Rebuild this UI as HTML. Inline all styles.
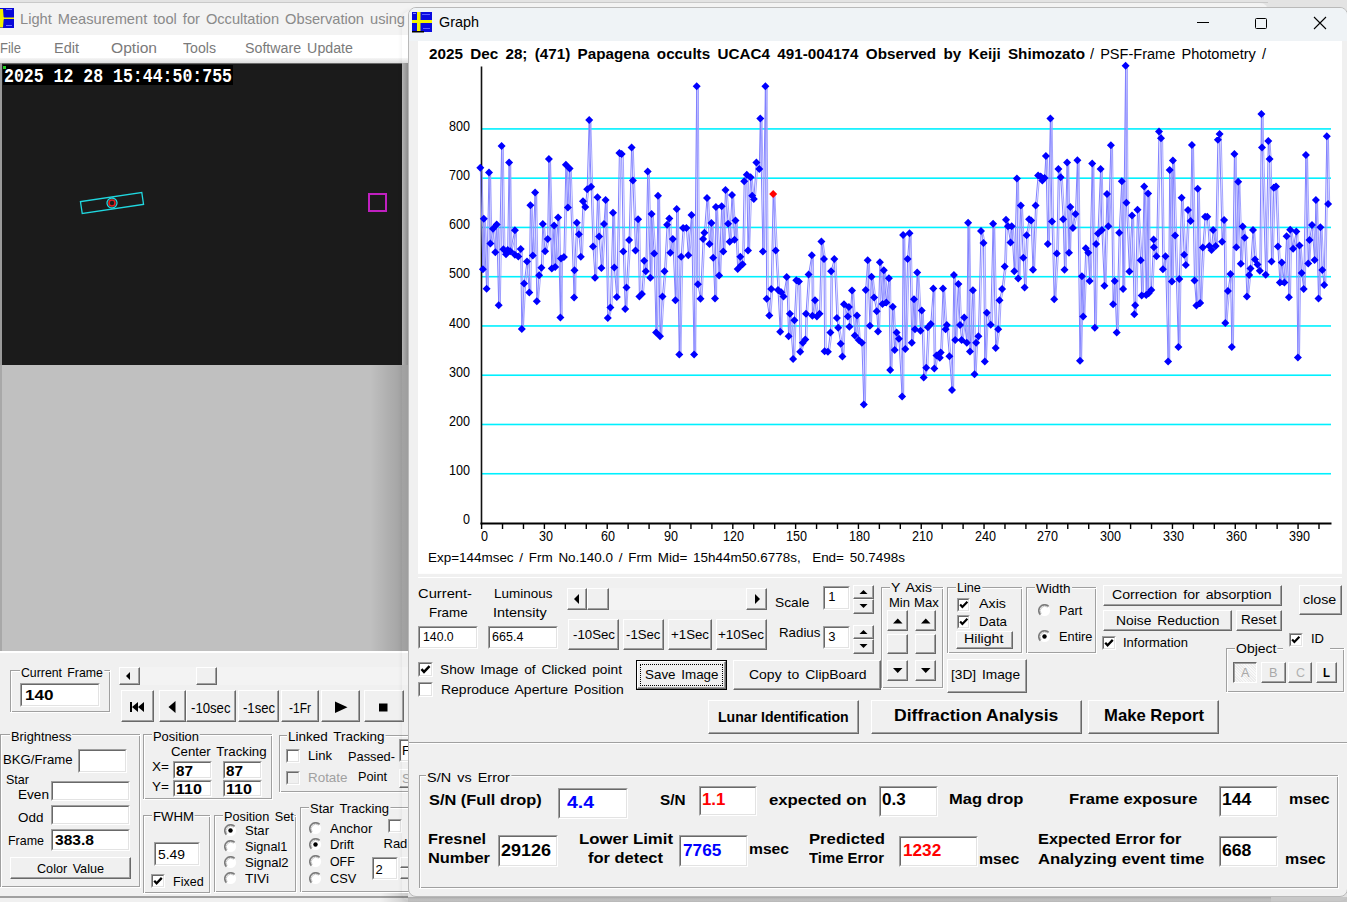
<!DOCTYPE html><html><head><meta charset="utf-8"><style>
html,body{margin:0;padding:0;}
body{width:1347px;height:902px;position:relative;overflow:hidden;background:#e3e3e3;font-family:'Liberation Sans', sans-serif;}
.a{position:absolute;}
.t{position:absolute;white-space:pre;line-height:1;transform-origin:0 0;}
</style></head><body>
<div class="a" style="left:0px;top:0px;width:1347px;height:902px;background:#e3e3e3;"></div>
<div class="a" style="left:0px;top:2px;width:1268px;height:1px;background:#c9c9c9;"></div>
<div class="a" style="left:0px;top:3px;width:1268px;height:32px;background:#f3f3f3;border-top-right-radius:8px;"></div>
<svg class="a" style="left:0px;top:8px" width="15" height="21" viewBox="0 0 15 21"><rect x="0" y="0" width="14" height="20" fill="#0808d8"/><path d="M0 8.5 L4 9.6 L14 9.6 L14 11 L4 11 L0 12 Z" fill="#f0f000"/><path d="M0 1 L3 1 L3.6 9 L4.2 10.2 L3.6 12 L3 19.5 L0 19.5 Z" fill="#f0f000"/><rect x="6" y="1" width="6" height="1" fill="#7070ff"/><rect x="6" y="17" width="6" height="1" fill="#7070ff"/></svg>
<div class="t" style="left:20.00px;top:11.20px;font-size:15px;color:#8a8a8a;word-spacing:2px;transform:scale(0.9754,1.0);">Light Measurement tool for Occultation Observation using</div>
<div class="a" style="left:0px;top:35px;width:408px;height:23px;background:#fff;"></div>
<div class="a" style="left:0px;top:58px;width:408px;height:6px;background:linear-gradient(#f6f6f6,#d8d8d8);"></div>
<div class="t" style="left:0.00px;top:40.65px;font-size:14px;color:#7a7a7a;transform:scale(0.9307,1.0);">File</div>
<div class="t" style="left:54.00px;top:40.65px;font-size:14px;color:#7a7a7a;transform:scale(1.0363,1.0);">Edit</div>
<div class="t" style="left:111.00px;top:40.65px;font-size:14px;color:#7a7a7a;transform:scale(1.1152,1.0);">Option</div>
<div class="t" style="left:183.00px;top:40.65px;font-size:14px;color:#7a7a7a;transform:scale(1.0096,1.0);">Tools</div>
<div class="t" style="left:245.00px;top:40.65px;font-size:14px;color:#7a7a7a;word-spacing:2px;transform:scale(1.0160,1.0);">Software Update</div>
<div class="a" style="left:0px;top:63px;width:408px;height:302px;background:#a0a0a0;"></div>
<div class="a" style="left:0px;top:63px;width:402px;height:1px;background:#696969;"></div>
<div class="a" style="left:0px;top:63px;width:2px;height:302px;background:#9a9a9a;"></div>
<div class="a" style="left:2px;top:64px;width:400px;height:301px;background:#1b1b1b;"></div>
<div class="a" style="left:402px;top:63px;width:6px;height:302px;background:linear-gradient(90deg,#b4b4b4,#8c8c8c);"></div>
<div class="a" style="left:2.5px;top:65px;width:230.5px;height:20px;background:#000;"></div>
<div class="t" style="left:4.00px;top:66.31px;font-size:16px;color:#fff;font-weight:700;font-family:'Liberation Mono', monospace;transform:scale(1.0324,1.32);">2025 12 28 15:44:50:755</div>
<div class="a" style="left:3px;top:66px;width:3px;height:3px;background:#22cc22;"></div>
<svg class="a" style="left:70px;top:180px" width="90" height="45" viewBox="70 180 90 45"><g transform="rotate(-8.5 112 203)" fill="none" stroke="#20d8e0" stroke-width="1.3"><rect x="81" y="197" width="62" height="12"/><circle cx="112" cy="203" r="5"/></g><circle cx="112" cy="203" r="3" fill="none" stroke="#e02020" stroke-width="1.6"/></svg>
<div class="a" style="left:368px;top:193px;width:19px;height:19px;border:2px solid #c020c0;box-sizing:border-box;"></div>
<div class="a" style="left:0px;top:365px;width:408px;height:286px;background:#c0c0c0;"></div>
<div class="a" style="left:0px;top:365px;width:2px;height:286px;background:#a8a8a8;"></div>
<div class="a" style="left:370px;top:365px;width:38px;height:286px;background:linear-gradient(90deg,rgba(0,0,0,0),rgba(0,0,0,0.18));"></div>
<div class="a" style="left:0px;top:651px;width:408px;height:251px;background:#f0f0f0;"></div>
<div class="a" style="left:0px;top:651px;width:408px;height:2px;background:#fff;"></div>
<div class="a" style="left:0px;top:896px;width:408px;height:1.5px;background:#a0a0a0;"></div>
<div class="a" style="left:0px;top:897.5px;width:408px;height:5px;background:#f0f0f0;"></div>
<div class="a" style="left:10px;top:670px;width:100px;height:42px;border:1px solid #a0a0a0;box-sizing:border-box;"></div>
<div class="a" style="left:11px;top:671px;width:99px;height:41px;border-left:1px solid #fff;border-top:1px solid #fff;box-sizing:border-box;"></div>
<div class="a" style="left:10px;top:670px;width:101px;height:43px;border-right:1px solid #fff;border-bottom:1px solid #fff;box-sizing:border-box;"></div>
<div class="t" style="left:21.00px;top:665.50px;font-size:13px;color:#000;word-spacing:2px;transform:scale(0.9476,1.0);background:#f0f0f0;padding:0 1px;margin-left:-1px;">Current Frame</div>
<div class="a" style="left:20px;top:683px;width:80px;height:24px;background:#fff;border-top:1px solid #a0a0a0;border-left:1px solid #a0a0a0;border-bottom:1px solid #fff;border-right:1px solid #fff;box-sizing:border-box;"></div>
<div class="a" style="left:21px;top:684px;width:78px;height:22px;border-top:1px solid #696969;border-left:1px solid #696969;border-bottom:1px solid #e3e3e3;border-right:1px solid #e3e3e3;box-sizing:border-box;"></div>
<div class="t" style="left:24.50px;top:687.30px;font-size:15px;color:#000;font-weight:700;transform:scale(1.1386,1.0);">140</div>
<div class="a" style="left:119px;top:667px;width:289px;height:18px;background:#f3f3f3;"></div>
<div class="a" style="left:119px;top:667px;width:21px;height:18px;background:#f0f0f0;border-top:1px solid #fff;border-left:1px solid #fff;border-bottom:1px solid #696969;border-right:1px solid #696969;box-sizing:border-box;"></div>
<div class="a" style="left:120px;top:668px;width:19px;height:16px;border-bottom:1px solid #a0a0a0;border-right:1px solid #a0a0a0;box-sizing:border-box;"></div>
<svg class="a" style="left:119px;top:667px" width="21" height="18"><path d="M7 9 L11 5 L11 13 Z" fill="#000"/></svg>
<div class="a" style="left:196px;top:667px;width:21px;height:18px;background:#f0f0f0;border-top:1px solid #fff;border-left:1px solid #fff;border-bottom:1px solid #696969;border-right:1px solid #696969;box-sizing:border-box;"></div>
<div class="a" style="left:197px;top:668px;width:19px;height:16px;border-bottom:1px solid #a0a0a0;border-right:1px solid #a0a0a0;box-sizing:border-box;"></div>
<div class="a" style="left:121px;top:690px;width:33px;height:32px;background:#f0f0f0;border-top:1px solid #fff;border-left:1px solid #fff;border-bottom:1px solid #696969;border-right:1px solid #696969;box-sizing:border-box;"></div>
<div class="a" style="left:122px;top:691px;width:31px;height:30px;border-bottom:1px solid #a0a0a0;border-right:1px solid #a0a0a0;box-sizing:border-box;"></div>
<div class="a" style="left:159px;top:690px;width:27px;height:32px;background:#f0f0f0;border-top:1px solid #fff;border-left:1px solid #fff;border-bottom:1px solid #696969;border-right:1px solid #696969;box-sizing:border-box;"></div>
<div class="a" style="left:160px;top:691px;width:25px;height:30px;border-bottom:1px solid #a0a0a0;border-right:1px solid #a0a0a0;box-sizing:border-box;"></div>
<div class="a" style="left:186px;top:690px;width:50px;height:32px;background:#f0f0f0;border-top:1px solid #fff;border-left:1px solid #fff;border-bottom:1px solid #696969;border-right:1px solid #696969;box-sizing:border-box;"></div>
<div class="a" style="left:187px;top:691px;width:48px;height:30px;border-bottom:1px solid #a0a0a0;border-right:1px solid #a0a0a0;box-sizing:border-box;"></div>
<div class="t" style="left:191.25px;top:700.65px;font-size:14px;color:#000;transform:scale(0.9398,1.0);">-10sec</div>
<div class="a" style="left:238px;top:690px;width:41px;height:32px;background:#f0f0f0;border-top:1px solid #fff;border-left:1px solid #fff;border-bottom:1px solid #696969;border-right:1px solid #696969;box-sizing:border-box;"></div>
<div class="a" style="left:239px;top:691px;width:39px;height:30px;border-bottom:1px solid #a0a0a0;border-right:1px solid #a0a0a0;box-sizing:border-box;"></div>
<div class="t" style="left:242.50px;top:700.65px;font-size:14px;color:#000;transform:scale(0.9347,1.0);">-1sec</div>
<div class="a" style="left:281px;top:690px;width:38px;height:32px;background:#f0f0f0;border-top:1px solid #fff;border-left:1px solid #fff;border-bottom:1px solid #696969;border-right:1px solid #696969;box-sizing:border-box;"></div>
<div class="a" style="left:282px;top:691px;width:36px;height:30px;border-bottom:1px solid #a0a0a0;border-right:1px solid #a0a0a0;box-sizing:border-box;"></div>
<div class="t" style="left:289.00px;top:700.65px;font-size:14px;color:#000;transform:scale(0.8570,1.0);">-1Fr</div>
<div class="a" style="left:321px;top:690px;width:39px;height:32px;background:#f0f0f0;border-top:1px solid #fff;border-left:1px solid #fff;border-bottom:1px solid #696969;border-right:1px solid #696969;box-sizing:border-box;"></div>
<div class="a" style="left:322px;top:691px;width:37px;height:30px;border-bottom:1px solid #a0a0a0;border-right:1px solid #a0a0a0;box-sizing:border-box;"></div>
<div class="a" style="left:364px;top:690px;width:40px;height:32px;background:#f0f0f0;border-top:1px solid #fff;border-left:1px solid #fff;border-bottom:1px solid #696969;border-right:1px solid #696969;box-sizing:border-box;"></div>
<div class="a" style="left:365px;top:691px;width:38px;height:30px;border-bottom:1px solid #a0a0a0;border-right:1px solid #a0a0a0;box-sizing:border-box;"></div>
<svg class="a" style="left:121px;top:690px" width="290" height="32" viewBox="121 690 290 32"><path d="M130 702 h2 v10 h-2z M132 707 l6 -5 v10z M138 707 l6 -5 v10z" fill="#000"/><path d="M168.5 707 l7 -6 v12z" fill="#000"/><path d="M335 701.5 l12.5 5.75 l-12.5 5.75z" fill="#000"/><rect x="379" y="703.5" width="8.5" height="8" fill="#000"/></svg>
<div class="a" style="left:0px;top:734px;width:140px;height:153px;border:1px solid #a0a0a0;box-sizing:border-box;"></div>
<div class="a" style="left:1px;top:735px;width:139px;height:152px;border-left:1px solid #fff;border-top:1px solid #fff;box-sizing:border-box;"></div>
<div class="a" style="left:0px;top:734px;width:141px;height:154px;border-right:1px solid #fff;border-bottom:1px solid #fff;box-sizing:border-box;"></div>
<div class="t" style="left:10.50px;top:730.00px;font-size:13px;color:#000;transform:scale(0.9850,1.0);background:#f0f0f0;padding:0 1px;margin-left:-1px;">Brightness</div>
<div class="t" style="left:3.00px;top:752.50px;font-size:13px;color:#000;transform:scale(1.0128,1.0);">BKG/Frame</div>
<div class="a" style="left:78px;top:749px;width:49px;height:24px;background:#fff;border-top:1px solid #a0a0a0;border-left:1px solid #a0a0a0;border-bottom:1px solid #fff;border-right:1px solid #fff;box-sizing:border-box;"></div>
<div class="a" style="left:79px;top:750px;width:47px;height:22px;border-top:1px solid #696969;border-left:1px solid #696969;border-bottom:1px solid #e3e3e3;border-right:1px solid #e3e3e3;box-sizing:border-box;"></div>
<div class="t" style="left:6.00px;top:772.50px;font-size:13px;color:#000;transform:scale(0.9646,1.0);">Star</div>
<div class="t" style="left:18.20px;top:787.70px;font-size:13px;color:#000;transform:scale(1.0459,1.0);">Even</div>
<div class="a" style="left:51px;top:780.5px;width:79px;height:20.5px;background:#fff;border-top:1px solid #a0a0a0;border-left:1px solid #a0a0a0;border-bottom:1px solid #fff;border-right:1px solid #fff;box-sizing:border-box;"></div>
<div class="a" style="left:52px;top:781.5px;width:77px;height:18.5px;border-top:1px solid #696969;border-left:1px solid #696969;border-bottom:1px solid #e3e3e3;border-right:1px solid #e3e3e3;box-sizing:border-box;"></div>
<div class="t" style="left:18.20px;top:811.00px;font-size:13px;color:#000;transform:scale(1.0334,1.0);">Odd</div>
<div class="a" style="left:51px;top:805px;width:79px;height:20px;background:#fff;border-top:1px solid #a0a0a0;border-left:1px solid #a0a0a0;border-bottom:1px solid #fff;border-right:1px solid #fff;box-sizing:border-box;"></div>
<div class="a" style="left:52px;top:806px;width:77px;height:18px;border-top:1px solid #696969;border-left:1px solid #696969;border-bottom:1px solid #e3e3e3;border-right:1px solid #e3e3e3;box-sizing:border-box;"></div>
<div class="t" style="left:8.00px;top:834.00px;font-size:13px;color:#000;transform:scale(0.9584,1.0);">Frame</div>
<div class="a" style="left:51px;top:829px;width:79px;height:22px;background:#fff;border-top:1px solid #a0a0a0;border-left:1px solid #a0a0a0;border-bottom:1px solid #fff;border-right:1px solid #fff;box-sizing:border-box;"></div>
<div class="a" style="left:52px;top:830px;width:77px;height:20px;border-top:1px solid #696969;border-left:1px solid #696969;border-bottom:1px solid #e3e3e3;border-right:1px solid #e3e3e3;box-sizing:border-box;"></div>
<div class="t" style="left:55.00px;top:833.15px;font-size:14px;color:#000;font-weight:700;transform:scale(1.1128,1.0);">383.8</div>
<div class="a" style="left:10px;top:857px;width:121px;height:22px;background:#f0f0f0;border-top:1px solid #fff;border-left:1px solid #fff;border-bottom:1px solid #696969;border-right:1px solid #696969;box-sizing:border-box;"></div>
<div class="a" style="left:11px;top:858px;width:119px;height:20px;border-bottom:1px solid #a0a0a0;border-right:1px solid #a0a0a0;box-sizing:border-box;"></div>
<div class="t" style="left:37.00px;top:861.50px;font-size:13px;color:#000;word-spacing:2px;transform:scale(0.9715,1.0);">Color Value</div>
<div class="a" style="left:143px;top:734px;width:129px;height:65px;border:1px solid #a0a0a0;box-sizing:border-box;"></div>
<div class="a" style="left:144px;top:735px;width:128px;height:64px;border-left:1px solid #fff;border-top:1px solid #fff;box-sizing:border-box;"></div>
<div class="a" style="left:143px;top:734px;width:130px;height:66px;border-right:1px solid #fff;border-bottom:1px solid #fff;box-sizing:border-box;"></div>
<div class="t" style="left:153.00px;top:730.00px;font-size:13px;color:#000;transform:scale(0.9946,1.0);background:#f0f0f0;padding:0 1px;margin-left:-1px;">Position</div>
<div class="t" style="left:171.00px;top:745.30px;font-size:13px;color:#000;word-spacing:2px;transform:scale(1.0196,1.0);">Center Tracking</div>
<div class="t" style="left:152.20px;top:760.00px;font-size:13px;color:#000;transform:scale(1.0451,1.0);">X=</div>
<div class="t" style="left:152.20px;top:779.70px;font-size:13px;color:#000;transform:scale(1.0451,1.0);">Y=</div>
<div class="a" style="left:173px;top:761px;width:39px;height:18px;background:#fff;border-top:1px solid #a0a0a0;border-left:1px solid #a0a0a0;border-bottom:1px solid #fff;border-right:1px solid #fff;box-sizing:border-box;"></div>
<div class="a" style="left:174px;top:762px;width:37px;height:16px;border-top:1px solid #696969;border-left:1px solid #696969;border-bottom:1px solid #e3e3e3;border-right:1px solid #e3e3e3;box-sizing:border-box;"></div>
<div class="a" style="left:173px;top:779.5px;width:39px;height:17px;background:#fff;border-top:1px solid #a0a0a0;border-left:1px solid #a0a0a0;border-bottom:1px solid #fff;border-right:1px solid #fff;box-sizing:border-box;"></div>
<div class="a" style="left:174px;top:780.5px;width:37px;height:15px;border-top:1px solid #696969;border-left:1px solid #696969;border-bottom:1px solid #e3e3e3;border-right:1px solid #e3e3e3;box-sizing:border-box;"></div>
<div class="t" style="left:176.40px;top:764.15px;font-size:14px;color:#000;font-weight:700;transform:scale(1.0913,1.0);">87</div>
<div class="t" style="left:176.40px;top:781.85px;font-size:14px;color:#000;font-weight:700;transform:scale(1.1508,1.0);">110</div>
<div class="a" style="left:223px;top:761px;width:39px;height:18px;background:#fff;border-top:1px solid #a0a0a0;border-left:1px solid #a0a0a0;border-bottom:1px solid #fff;border-right:1px solid #fff;box-sizing:border-box;"></div>
<div class="a" style="left:224px;top:762px;width:37px;height:16px;border-top:1px solid #696969;border-left:1px solid #696969;border-bottom:1px solid #e3e3e3;border-right:1px solid #e3e3e3;box-sizing:border-box;"></div>
<div class="a" style="left:223px;top:779.5px;width:39px;height:17px;background:#fff;border-top:1px solid #a0a0a0;border-left:1px solid #a0a0a0;border-bottom:1px solid #fff;border-right:1px solid #fff;box-sizing:border-box;"></div>
<div class="a" style="left:224px;top:780.5px;width:37px;height:15px;border-top:1px solid #696969;border-left:1px solid #696969;border-bottom:1px solid #e3e3e3;border-right:1px solid #e3e3e3;box-sizing:border-box;"></div>
<div class="t" style="left:226.40px;top:764.15px;font-size:14px;color:#000;font-weight:700;transform:scale(1.0913,1.0);">87</div>
<div class="t" style="left:226.40px;top:781.85px;font-size:14px;color:#000;font-weight:700;transform:scale(1.1508,1.0);">110</div>
<div class="a" style="left:143px;top:814.5px;width:67px;height:78px;border:1px solid #a0a0a0;box-sizing:border-box;"></div>
<div class="a" style="left:144px;top:815.5px;width:66px;height:77px;border-left:1px solid #fff;border-top:1px solid #fff;box-sizing:border-box;"></div>
<div class="a" style="left:143px;top:814.5px;width:68px;height:79px;border-right:1px solid #fff;border-bottom:1px solid #fff;box-sizing:border-box;"></div>
<div class="t" style="left:153.00px;top:810.00px;font-size:13px;color:#000;transform:scale(1.0139,1.0);background:#f0f0f0;padding:0 1px;margin-left:-1px;">FWHM</div>
<div class="a" style="left:154px;top:842px;width:46px;height:24px;background:#fff;border-top:1px solid #a0a0a0;border-left:1px solid #a0a0a0;border-bottom:1px solid #fff;border-right:1px solid #fff;box-sizing:border-box;"></div>
<div class="a" style="left:155px;top:843px;width:44px;height:22px;border-top:1px solid #696969;border-left:1px solid #696969;border-bottom:1px solid #e3e3e3;border-right:1px solid #e3e3e3;box-sizing:border-box;"></div>
<div class="t" style="left:157.60px;top:848.00px;font-size:13px;color:#000;transform:scale(1.0667,1.0);">5.49</div>
<div class="a" style="left:151px;top:873.5px;width:14px;height:14px;background:#fff;border-top:1px solid #a0a0a0;border-left:1px solid #a0a0a0;border-bottom:1px solid #fff;border-right:1px solid #fff;box-sizing:border-box;"></div>
<div class="a" style="left:152px;top:874.5px;width:12px;height:12px;border-top:1px solid #696969;border-left:1px solid #696969;border-bottom:1px solid #e3e3e3;border-right:1px solid #e3e3e3;box-sizing:border-box;"></div>
<svg class="a" style="left:151px;top:873.5px" width="14" height="14" viewBox="0 0 13 13"><path d="M3 6.2 L5.2 8.6 L10 3.6" stroke="#000" stroke-width="2.1" fill="none"/></svg>
<div class="t" style="left:173.40px;top:874.60px;font-size:13px;color:#000;transform:scale(0.9624,1.0);">Fixed</div>
<div class="a" style="left:213.5px;top:814.5px;width:82px;height:77.5px;border:1px solid #a0a0a0;box-sizing:border-box;"></div>
<div class="a" style="left:214.5px;top:815.5px;width:81px;height:76.5px;border-left:1px solid #fff;border-top:1px solid #fff;box-sizing:border-box;"></div>
<div class="a" style="left:213.5px;top:814.5px;width:83px;height:78.5px;border-right:1px solid #fff;border-bottom:1px solid #fff;box-sizing:border-box;"></div>
<div class="t" style="left:223.60px;top:810.00px;font-size:13px;color:#000;word-spacing:2px;transform:scale(0.9779,1.0);background:#f0f0f0;padding:0 1px;margin-left:-1px;">Position Set</div>
<svg class="a" style="left:224.1px;top:823.5px" width="13" height="13" viewBox="-6.5 -6.5 13 13"><circle cx="0" cy="0" r="5.6" fill="#fff"/><path d="M4.1 -4.1 A5.8 5.8 0 0 0 -4.1 4.1" stroke="#7c7c7c" stroke-width="1.7" fill="none"/><path d="M3.3 -3.3 A4.7 4.7 0 0 0 -3.3 3.3" stroke="#b8b8b8" stroke-width="0.8" fill="none"/><circle cx="0" cy="0" r="2.2" fill="#000"/></svg>
<div class="t" style="left:245.30px;top:824.00px;font-size:13px;color:#000;transform:scale(1.0066,1.0);">Star</div>
<svg class="a" style="left:224.1px;top:839.5px" width="13" height="13" viewBox="-6.5 -6.5 13 13"><circle cx="0" cy="0" r="5.6" fill="#fff"/><path d="M4.1 -4.1 A5.8 5.8 0 0 0 -4.1 4.1" stroke="#7c7c7c" stroke-width="1.7" fill="none"/><path d="M3.3 -3.3 A4.7 4.7 0 0 0 -3.3 3.3" stroke="#b8b8b8" stroke-width="0.8" fill="none"/></svg>
<div class="t" style="left:245.30px;top:840.00px;font-size:13px;color:#000;transform:scale(0.9775,1.0);">Signal1</div>
<svg class="a" style="left:224.1px;top:855.7px" width="13" height="13" viewBox="-6.5 -6.5 13 13"><circle cx="0" cy="0" r="5.6" fill="#fff"/><path d="M4.1 -4.1 A5.8 5.8 0 0 0 -4.1 4.1" stroke="#7c7c7c" stroke-width="1.7" fill="none"/><path d="M3.3 -3.3 A4.7 4.7 0 0 0 -3.3 3.3" stroke="#b8b8b8" stroke-width="0.8" fill="none"/></svg>
<div class="t" style="left:245.30px;top:856.20px;font-size:13px;color:#000;transform:scale(1.0052,1.0);">Signal2</div>
<svg class="a" style="left:224.1px;top:871.9px" width="13" height="13" viewBox="-6.5 -6.5 13 13"><circle cx="0" cy="0" r="5.6" fill="#fff"/><path d="M4.1 -4.1 A5.8 5.8 0 0 0 -4.1 4.1" stroke="#7c7c7c" stroke-width="1.7" fill="none"/><path d="M3.3 -3.3 A4.7 4.7 0 0 0 -3.3 3.3" stroke="#b8b8b8" stroke-width="0.8" fill="none"/></svg>
<div class="t" style="left:245.30px;top:872.40px;font-size:13px;color:#000;transform:scale(1.0485,1.0);">TIVi</div>
<div class="a" style="left:278.6px;top:734.5px;width:140px;height:57px;border:1px solid #a0a0a0;box-sizing:border-box;"></div>
<div class="a" style="left:279.6px;top:735.5px;width:139px;height:56px;border-left:1px solid #fff;border-top:1px solid #fff;box-sizing:border-box;"></div>
<div class="a" style="left:278.6px;top:734.5px;width:141px;height:58px;border-right:1px solid #fff;border-bottom:1px solid #fff;box-sizing:border-box;"></div>
<div class="t" style="left:288.00px;top:730.00px;font-size:13px;color:#000;word-spacing:2px;transform:scale(1.0369,1.0);background:#f0f0f0;padding:0 1px;margin-left:-1px;">Linked Tracking</div>
<div class="a" style="left:285.5px;top:748.5px;width:14px;height:14px;background:#fff;border-top:1px solid #a0a0a0;border-left:1px solid #a0a0a0;border-bottom:1px solid #fff;border-right:1px solid #fff;box-sizing:border-box;"></div>
<div class="a" style="left:286.5px;top:749.5px;width:12px;height:12px;border-top:1px solid #696969;border-left:1px solid #696969;border-bottom:1px solid #e3e3e3;border-right:1px solid #e3e3e3;box-sizing:border-box;"></div>
<div class="t" style="left:308.30px;top:748.50px;font-size:13px;color:#000;transform:scale(1.0059,1.0);">Link</div>
<div class="t" style="left:348.20px;top:749.50px;font-size:13px;color:#000;transform:scale(0.9853,1.0);">Passed-</div>
<div class="a" style="left:399px;top:739px;width:20px;height:22.5px;background:#fff;border-top:1px solid #a0a0a0;border-left:1px solid #a0a0a0;border-bottom:1px solid #fff;border-right:1px solid #fff;box-sizing:border-box;"></div>
<div class="a" style="left:400px;top:740px;width:18px;height:20.5px;border-top:1px solid #696969;border-left:1px solid #696969;border-bottom:1px solid #e3e3e3;border-right:1px solid #e3e3e3;box-sizing:border-box;"></div>
<div class="t" style="left:402.00px;top:744.00px;font-size:13px;color:#000;">F</div>
<div class="a" style="left:285.5px;top:771px;width:14px;height:14px;background:#f0f0f0;border-top:1px solid #a0a0a0;border-left:1px solid #a0a0a0;border-bottom:1px solid #fff;border-right:1px solid #fff;box-sizing:border-box;"></div>
<div class="a" style="left:286.5px;top:772px;width:12px;height:12px;border-top:1px solid #696969;border-left:1px solid #696969;border-bottom:1px solid #e3e3e3;border-right:1px solid #e3e3e3;box-sizing:border-box;"></div>
<div class="t" style="left:308.30px;top:770.50px;font-size:13px;color:#a0a0a0;transform:scale(1.0310,1.0);">Rotate</div>
<div class="t" style="left:358.30px;top:769.50px;font-size:13px;color:#000;transform:scale(0.9784,1.0);">Point</div>
<div class="a" style="left:399px;top:768.5px;width:20px;height:19px;background:#f0f0f0;border-top:1px solid #fff;border-left:1px solid #fff;border-bottom:1px solid #696969;border-right:1px solid #696969;box-sizing:border-box;"></div>
<div class="a" style="left:400px;top:769.5px;width:18px;height:17px;border-bottom:1px solid #a0a0a0;border-right:1px solid #a0a0a0;box-sizing:border-box;"></div>
<div class="t" style="left:402.00px;top:772.00px;font-size:13px;color:#a0a0a0;">S</div>
<div class="a" style="left:300px;top:807px;width:120px;height:85px;border:1px solid #a0a0a0;box-sizing:border-box;"></div>
<div class="a" style="left:301px;top:808px;width:119px;height:84px;border-left:1px solid #fff;border-top:1px solid #fff;box-sizing:border-box;"></div>
<div class="a" style="left:300px;top:807px;width:121px;height:86px;border-right:1px solid #fff;border-bottom:1px solid #fff;box-sizing:border-box;"></div>
<div class="t" style="left:310.30px;top:802.00px;font-size:13px;color:#000;word-spacing:2px;transform:scale(1.0052,1.0);background:#f0f0f0;padding:0 1px;margin-left:-1px;">Star Tracking</div>
<svg class="a" style="left:309.0px;top:821.5px" width="13" height="13" viewBox="-6.5 -6.5 13 13"><circle cx="0" cy="0" r="5.6" fill="#fff"/><path d="M4.1 -4.1 A5.8 5.8 0 0 0 -4.1 4.1" stroke="#7c7c7c" stroke-width="1.7" fill="none"/><path d="M3.3 -3.3 A4.7 4.7 0 0 0 -3.3 3.3" stroke="#b8b8b8" stroke-width="0.8" fill="none"/></svg>
<div class="t" style="left:330.00px;top:822.00px;font-size:13px;color:#000;transform:scale(1.0290,1.0);">Anchor</div>
<svg class="a" style="left:309.0px;top:837.5px" width="13" height="13" viewBox="-6.5 -6.5 13 13"><circle cx="0" cy="0" r="5.6" fill="#fff"/><path d="M4.1 -4.1 A5.8 5.8 0 0 0 -4.1 4.1" stroke="#7c7c7c" stroke-width="1.7" fill="none"/><path d="M3.3 -3.3 A4.7 4.7 0 0 0 -3.3 3.3" stroke="#b8b8b8" stroke-width="0.8" fill="none"/><circle cx="0" cy="0" r="2.2" fill="#000"/></svg>
<div class="t" style="left:330.00px;top:838.00px;font-size:13px;color:#000;transform:scale(1.0066,1.0);">Drift</div>
<svg class="a" style="left:309.0px;top:854.7px" width="13" height="13" viewBox="-6.5 -6.5 13 13"><circle cx="0" cy="0" r="5.6" fill="#fff"/><path d="M4.1 -4.1 A5.8 5.8 0 0 0 -4.1 4.1" stroke="#7c7c7c" stroke-width="1.7" fill="none"/><path d="M3.3 -3.3 A4.7 4.7 0 0 0 -3.3 3.3" stroke="#b8b8b8" stroke-width="0.8" fill="none"/></svg>
<div class="t" style="left:330.00px;top:855.20px;font-size:13px;color:#000;transform:scale(0.9500,1.0);">OFF</div>
<svg class="a" style="left:309.0px;top:871.9px" width="13" height="13" viewBox="-6.5 -6.5 13 13"><circle cx="0" cy="0" r="5.6" fill="#fff"/><path d="M4.1 -4.1 A5.8 5.8 0 0 0 -4.1 4.1" stroke="#7c7c7c" stroke-width="1.7" fill="none"/><path d="M3.3 -3.3 A4.7 4.7 0 0 0 -3.3 3.3" stroke="#b8b8b8" stroke-width="0.8" fill="none"/></svg>
<div class="t" style="left:330.00px;top:872.40px;font-size:13px;color:#000;transform:scale(0.9838,1.0);">CSV</div>
<div class="a" style="left:388px;top:818.5px;width:14px;height:14px;background:#fff;border-top:1px solid #a0a0a0;border-left:1px solid #a0a0a0;border-bottom:1px solid #fff;border-right:1px solid #fff;box-sizing:border-box;"></div>
<div class="a" style="left:389px;top:819.5px;width:12px;height:12px;border-top:1px solid #696969;border-left:1px solid #696969;border-bottom:1px solid #e3e3e3;border-right:1px solid #e3e3e3;box-sizing:border-box;"></div>
<div class="t" style="left:383.50px;top:837.00px;font-size:13px;color:#000;">Rad</div>
<div class="a" style="left:372px;top:857px;width:26px;height:22.5px;background:#fff;border-top:1px solid #a0a0a0;border-left:1px solid #a0a0a0;border-bottom:1px solid #fff;border-right:1px solid #fff;box-sizing:border-box;"></div>
<div class="a" style="left:373px;top:858px;width:24px;height:20.5px;border-top:1px solid #696969;border-left:1px solid #696969;border-bottom:1px solid #e3e3e3;border-right:1px solid #e3e3e3;box-sizing:border-box;"></div>
<div class="t" style="left:375.50px;top:862.70px;font-size:13px;color:#000;">2</div>
<div class="a" style="left:400px;top:857px;width:12px;height:11px;background:#f0f0f0;border-top:1px solid #fff;border-left:1px solid #fff;border-bottom:1px solid #696969;border-right:1px solid #696969;box-sizing:border-box;"></div>
<div class="a" style="left:401px;top:858px;width:10px;height:9px;border-bottom:1px solid #a0a0a0;border-right:1px solid #a0a0a0;box-sizing:border-box;"></div>
<div class="a" style="left:400px;top:868px;width:12px;height:11px;background:#f0f0f0;border-top:1px solid #fff;border-left:1px solid #fff;border-bottom:1px solid #696969;border-right:1px solid #696969;box-sizing:border-box;"></div>
<div class="a" style="left:401px;top:869px;width:10px;height:9px;border-bottom:1px solid #a0a0a0;border-right:1px solid #a0a0a0;box-sizing:border-box;"></div>
<div class="a" style="left:408px;top:897px;width:863px;height:5px;background:linear-gradient(#a8a8a8,#bdbdbd 40%,#c2c2c2);"></div>
<div class="a" style="left:1271px;top:897px;width:76px;height:5px;background:#c8c8c8;"></div>
<div class="a" style="left:380px;top:893px;width:28px;height:9px;background:linear-gradient(90deg,rgba(0,0,0,0),rgba(0,0,0,0.15));"></div>
<div class="a" style="left:402px;top:11px;width:946px;height:890px;box-shadow:0 0 5px rgba(0,0,0,0.08);border-radius:8px;"></div>
<div class="a" style="left:408px;top:7px;width:940px;height:890px;background:#f0f0f0;border-radius:8px;border:1px solid #b9b9b9;box-sizing:border-box;overflow:hidden;"></div>
<div class="a" style="left:409px;top:8px;width:938px;height:33px;background:#eff3f6;border-top-left-radius:7px;border-top-right-radius:7px;"></div>
<svg class="a" style="left:412px;top:12px" width="21" height="21" viewBox="0 0 21 21"><rect x="0" y="0" width="20" height="20" fill="#0a0ae0"/><rect x="0" y="8" width="20" height="3" fill="#f5f500"/><rect x="5" y="0" width="3.5" height="20" fill="#f5f500"/><rect x="1" y="1" width="3" height="1" fill="#8080ff"/><rect x="10" y="2" width="8" height="1" fill="#6060ff"/><rect x="11" y="16" width="7" height="1" fill="#6060ff"/><rect x="0" y="19" width="12" height="1.5" fill="#000"/></svg>
<div class="t" style="left:439.30px;top:15.43px;font-size:14.5px;color:#000;transform:scale(0.9922,1.0);">Graph</div>
<div class="a" style="left:1197px;top:22px;width:12px;height:1px;background:#000;"></div>
<div class="a" style="left:1255px;top:17.5px;width:12px;height:11.5px;border:1px solid #000;border-radius:1.5px;box-sizing:border-box;"></div>
<svg class="a" style="left:1313px;top:16px" width="14" height="14"><path d="M1 1 L13 13 M13 1 L1 13" stroke="#000" stroke-width="1.1"/></svg>
<div class="a" style="left:418px;top:41px;width:924px;height:532px;background:#fff;"></div>
<div class="a" style="left:418px;top:573px;width:924px;height:1px;background:#fdfdfd;"></div>
<div class="a" style="left:418px;top:577px;width:924px;height:1px;background:#fff;"></div>
<div class="t" style="left:428.90px;top:46.30px;font-size:15px;color:#000;font-weight:700;transform:scale(1.0158,1.0);word-spacing:3px;">2025 Dec 28; (471) Papagena occults UCAC4 491-004174 Observed by Keiji Shimozato</div>
<div class="t" style="left:1090.00px;top:47.15px;font-size:14px;color:#000;word-spacing:2px;transform:scale(1.0391,1.0);">/ PSF-Frame Photometry /</div>
<svg class="a" style="left:0;top:0" width="1347" height="902" viewBox="0 0 1347 902"><rect x="482" y="472.94" width="849" height="1.6" fill="#00f0ff"/><rect x="482" y="423.68" width="849" height="1.6" fill="#00f0ff"/><rect x="482" y="374.42" width="849" height="1.6" fill="#00f0ff"/><rect x="482" y="325.16" width="849" height="1.6" fill="#00f0ff"/><rect x="482" y="275.90" width="849" height="1.6" fill="#00f0ff"/><rect x="482" y="226.64" width="849" height="1.6" fill="#00f0ff"/><rect x="482" y="177.38" width="849" height="1.6" fill="#00f0ff"/><rect x="482" y="128.12" width="849" height="1.6" fill="#00f0ff"/><rect x="480.7" y="66.5" width="1.6" height="458" fill="#111"/><rect x="480.5" y="522.5" width="851" height="2" fill="#000"/><rect x="480.90" y="523" width="1.4" height="6" fill="#000"/><rect x="501.83" y="523" width="1.4" height="6" fill="#000"/><rect x="522.77" y="523" width="1.4" height="6" fill="#000"/><rect x="543.70" y="523" width="1.4" height="6" fill="#000"/><rect x="564.64" y="523" width="1.4" height="6" fill="#000"/><rect x="585.57" y="523" width="1.4" height="6" fill="#000"/><rect x="606.51" y="523" width="1.4" height="6" fill="#000"/><rect x="627.44" y="523" width="1.4" height="6" fill="#000"/><rect x="648.38" y="523" width="1.4" height="6" fill="#000"/><rect x="669.31" y="523" width="1.4" height="6" fill="#000"/><rect x="690.25" y="523" width="1.4" height="6" fill="#000"/><rect x="711.18" y="523" width="1.4" height="6" fill="#000"/><rect x="732.12" y="523" width="1.4" height="6" fill="#000"/><rect x="753.05" y="523" width="1.4" height="6" fill="#000"/><rect x="773.99" y="523" width="1.4" height="6" fill="#000"/><rect x="794.92" y="523" width="1.4" height="6" fill="#000"/><rect x="815.86" y="523" width="1.4" height="6" fill="#000"/><rect x="836.79" y="523" width="1.4" height="6" fill="#000"/><rect x="857.73" y="523" width="1.4" height="6" fill="#000"/><rect x="878.66" y="523" width="1.4" height="6" fill="#000"/><rect x="899.60" y="523" width="1.4" height="6" fill="#000"/><rect x="920.53" y="523" width="1.4" height="6" fill="#000"/><rect x="941.47" y="523" width="1.4" height="6" fill="#000"/><rect x="962.40" y="523" width="1.4" height="6" fill="#000"/><rect x="983.34" y="523" width="1.4" height="6" fill="#000"/><rect x="1004.27" y="523" width="1.4" height="6" fill="#000"/><rect x="1025.21" y="523" width="1.4" height="6" fill="#000"/><rect x="1046.14" y="523" width="1.4" height="6" fill="#000"/><rect x="1067.08" y="523" width="1.4" height="6" fill="#000"/><rect x="1088.02" y="523" width="1.4" height="6" fill="#000"/><rect x="1108.95" y="523" width="1.4" height="6" fill="#000"/><rect x="1129.89" y="523" width="1.4" height="6" fill="#000"/><rect x="1150.82" y="523" width="1.4" height="6" fill="#000"/><rect x="1171.76" y="523" width="1.4" height="6" fill="#000"/><rect x="1192.69" y="523" width="1.4" height="6" fill="#000"/><rect x="1213.62" y="523" width="1.4" height="6" fill="#000"/><rect x="1234.56" y="523" width="1.4" height="6" fill="#000"/><rect x="1255.49" y="523" width="1.4" height="6" fill="#000"/><rect x="1276.43" y="523" width="1.4" height="6" fill="#000"/><rect x="1297.37" y="523" width="1.4" height="6" fill="#000"/><rect x="1318.30" y="523" width="1.4" height="6" fill="#000"/><polyline fill="none" stroke="#8080ff" stroke-width="1" points="480.3,167.7 482.9,269.2 483.8,218.7 486.6,288.8 489.0,172.6 490.4,243.5 493.0,228.8 495.3,252.2 496.7,224.5 498.7,305.2 501.6,146.1 503.4,249.3 506.0,254.2 507.7,249.9 509.1,162.5 510.3,251.3 514.9,230.3 514.9,254.8 518.3,256.5 520.7,249.0 521.8,329.1 524.1,283.6 527.0,261.4 529.3,292.5 530.4,205.2 532.8,255.6 535.1,192.5 536.8,301.2 539.1,275.2 541.4,267.7 542.8,223.9 545.1,251.3 547.7,238.9 548.9,159.1 551.8,268.6 554.1,225.4 555.2,267.1 558.1,217.6 560.4,317.6 561.0,258.5 563.9,257.1 565.9,164.8 567.9,207.5 569.6,168.6 574.1,297.6 574.5,270.2 576.8,222.8 578.9,234.3 580.8,256.8 583.0,201.2 585.3,207.0 587.2,189.3 589.2,120.1 591.1,186.7 593.0,246.5 595.0,277.8 597.5,197.3 599.1,236.6 601.4,268.1 604.0,224.0 605.6,199.9 607.8,318.0 610.4,307.4 613.0,212.8 614.3,267.5 616.8,297.1 619.4,152.9 621.7,153.9 623.3,251.4 625.2,309.0 626.5,287.4 629.1,240.1 631.6,147.4 632.9,180.6 635.5,250.4 638.1,219.2 639.4,296.4 641.9,293.9 644.2,260.7 645.8,271.3 647.7,171.6 650.3,277.8 651.6,214.0 654.2,253.6 656.1,332.5 658.0,195.7 660.0,336.3 662.5,296.4 664.5,271.3 667.1,224.7 669.3,218.5 670.3,252.7 672.8,239.1 675.4,300.3 676.7,208.9 679.3,354.4 681.2,256.8 683.1,227.9 686.4,227.9 688.3,255.2 691.5,215.0 694.1,354.4 696.7,86.3 697.9,284.2 700.5,298.7 703.1,239.1 704.4,232.7 707.0,197.9 709.5,244.0 711.4,223.1 713.2,257.8 715.0,298.5 715.9,207.0 719.1,275.5 721.7,206.3 723.3,251.4 725.5,189.9 728.1,223.7 729.7,241.7 732.0,195.1 734.5,239.8 735.5,220.5 737.7,269.1 740.3,256.8 741.0,265.5 742.6,264.3 744.2,181.2 746.8,174.8 748.0,250.4 750.6,177.3 752.2,195.7 753.8,198.9 756.4,162.5 759.3,169.0 760.3,118.5 762.9,251.4 765.4,86.3 766.7,298.7 769.3,315.4 771.2,289.0 773.2,194.1 775.7,250.4 778.0,290.0 780.2,331.8 781.2,292.3 783.5,296.4 786.7,277.1 788.6,336.3 789.9,313.8 793.1,358.9 794.4,320.3 796.3,280.3 798.9,281.6 800.2,351.8 802.8,342.8 805.3,339.6 806.0,313.8 808.6,274.5 811.8,255.2 812.4,315.7 815.0,300.3 816.9,316.4 819.5,313.8 821.4,241.4 824.0,259.1 824.6,351.2 827.9,351.8 830.4,332.5 831.1,271.3 834.3,259.1 836.9,318.0 838.2,327.7 840.7,343.7 842.4,356.6 844.0,304.2 847.8,316.4 848.9,307.0 849.4,326.7 852.0,290.4 854.8,335.6 857.0,315.4 858.7,340.1 861.9,342.7 863.8,404.5 865.7,289.9 867.7,260.3 869.9,325.7 871.5,276.7 874.1,297.6 876.7,311.2 878.0,331.4 879.9,262.2 882.5,304.1 883.8,270.3 886.3,302.5 888.9,278.3 890.2,370.1 892.8,306.7 894.7,350.1 896.6,332.4 898.9,338.8 902.1,396.5 903.1,234.9 905.3,349.1 907.6,259.0 909.5,233.3 911.8,342.7 914.0,299.3 915.0,329.2 917.2,272.5 920.5,330.8 921.7,310.5 923.7,377.5 926.2,367.8 927.9,327.3 930.8,324.0 933.3,288.6 934.3,368.5 936.5,355.6 939.8,357.8 940.7,352.4 943.0,288.6 945.6,329.2 946.8,325.0 949.4,356.2 952.0,390.0 953.9,275.1 955.2,340.1 958.4,284.1 960.0,325.0 961.6,340.1 964.2,317.6 966.8,342.7 968.1,222.7 970.0,351.4 972.9,290.2 974.5,374.3 976.1,342.7 978.4,336.3 981.0,231.0 983.5,242.9 984.8,361.4 986.8,312.8 990.7,324.7 993.1,223.7 995.7,347.9 998.2,329.3 999.5,300.3 1002.1,289.0 1004.7,266.5 1006.0,219.8 1007.9,226.3 1010.5,242.4 1011.7,226.3 1014.3,271.3 1016.9,178.6 1018.2,278.4 1020.8,205.4 1023.3,257.8 1024.6,287.4 1026.6,235.3 1029.1,219.2 1031.1,220.5 1033.0,269.7 1035.6,205.4 1038.1,175.4 1040.7,176.4 1042.3,180.6 1044.6,178.0 1045.9,156.1 1047.8,244.0 1050.4,118.5 1052.0,221.4 1054.2,299.3 1056.8,253.6 1058.4,169.0 1060.7,177.3 1063.2,219.2 1064.5,269.7 1067.1,162.5 1069.0,252.7 1070.3,207.0 1072.9,227.9 1075.5,214.0 1077.4,160.3 1080.0,360.8 1081.9,276.2 1083.2,316.4 1085.8,248.2 1088.3,252.7 1089.6,281.0 1092.2,163.5 1094.8,327.7 1096.1,244.0 1098.0,233.4 1100.6,169.0 1101.9,230.1 1104.4,285.8 1107.0,194.1 1108.3,226.3 1110.9,145.2 1113.1,304.2 1114.7,281.0 1116.7,332.5 1119.2,232.7 1121.8,181.2 1123.1,289.0 1125.6,65.8 1126.4,202.8 1129.4,271.5 1132.0,215.5 1134.3,314.3 1135.2,305.3 1137.5,209.7 1140.7,260.2 1141.7,295.6 1144.2,186.5 1146.2,295.0 1148.1,193.6 1148.7,293.3 1151.3,290.1 1153.6,239.6 1153.9,247.3 1156.5,256.3 1159.0,131.5 1161.0,138.2 1162.9,269.2 1165.5,256.3 1168.1,361.6 1169.7,170.1 1171.9,281.4 1172.9,160.4 1175.1,235.4 1178.4,347.1 1179.3,278.9 1181.6,197.8 1184.2,254.7 1185.8,265.0 1188.0,210.0 1190.6,220.9 1191.9,145.0 1194.5,280.5 1196.4,305.6 1197.7,188.7 1200.2,303.0 1202.8,247.6 1205.1,216.7 1207.3,216.7 1209.3,246.0 1211.5,249.9 1213.1,229.9 1215.7,246.0 1217.9,139.8 1219.6,134.0 1222.1,241.8 1224.1,220.0 1225.3,323.0 1227.9,291.1 1230.5,274.0 1231.8,347.1 1234.4,154.0 1236.3,247.3 1238.2,181.7 1240.8,263.7 1242.7,226.4 1244.7,237.7 1246.9,296.6 1249.2,275.0 1250.5,268.6 1253.0,229.9 1255.0,259.5 1257.5,264.4 1259.8,270.8 1261.4,114.1 1262.0,147.5 1265.7,274.8 1268.3,141.0 1269.6,159.0 1271.5,261.6 1273.8,187.7 1276.0,186.4 1277.9,246.5 1279.9,282.5 1281.8,262.6 1284.4,282.5 1286.6,236.2 1288.9,297.3 1290.2,229.8 1293.1,248.7 1296.3,231.4 1297.9,357.4 1299.5,245.5 1301.7,272.9 1303.7,288.9 1305.9,154.9 1308.2,263.5 1309.5,240.1 1312.0,225.0 1314.6,260.0 1315.9,199.9 1318.5,298.6 1320.4,227.2 1322.3,270.0 1324.2,285.1 1326.8,136.2 1328.1,204.1"/><polyline fill="none" stroke="#9a9aff" stroke-width="0.9" points="481.9,167.7 484.5,269.2 485.4,218.7 488.2,288.8 490.6,172.6 492.0,243.5 494.6,228.8 496.9,252.2 498.3,224.5 500.3,305.2 503.2,146.1 505.0,249.3 507.6,254.2 509.3,249.9 510.7,162.5 511.9,251.3 516.5,230.3 516.5,254.8 519.9,256.5 522.3,249.0 523.4,329.1 525.7,283.6 528.6,261.4 530.9,292.5 532.0,205.2 534.4,255.6 536.7,192.5 538.4,301.2 540.7,275.2 543.0,267.7 544.4,223.9 546.7,251.3 549.3,238.9 550.5,159.1 553.4,268.6 555.7,225.4 556.8,267.1 559.7,217.6 562.0,317.6 562.6,258.5 565.5,257.1 567.5,164.8 569.5,207.5 571.2,168.6 575.7,297.6 576.1,270.2 578.4,222.8 580.5,234.3 582.4,256.8 584.6,201.2 586.9,207.0 588.8,189.3 590.8,120.1 592.7,186.7 594.6,246.5 596.6,277.8 599.1,197.3 600.7,236.6 603.0,268.1 605.6,224.0 607.2,199.9 609.4,318.0 612.0,307.4 614.6,212.8 615.9,267.5 618.4,297.1 621.0,152.9 623.3,153.9 624.9,251.4 626.8,309.0 628.1,287.4 630.7,240.1 633.2,147.4 634.5,180.6 637.1,250.4 639.7,219.2 641.0,296.4 643.5,293.9 645.8,260.7 647.4,271.3 649.3,171.6 651.9,277.8 653.2,214.0 655.8,253.6 657.7,332.5 659.6,195.7 661.6,336.3 664.1,296.4 666.1,271.3 668.7,224.7 670.9,218.5 671.9,252.7 674.4,239.1 677.0,300.3 678.3,208.9 680.9,354.4 682.8,256.8 684.7,227.9 688.0,227.9 689.9,255.2 693.1,215.0 695.7,354.4 698.3,86.3 699.5,284.2 702.1,298.7 704.7,239.1 706.0,232.7 708.6,197.9 711.1,244.0 713.0,223.1 714.8,257.8 716.6,298.5 717.5,207.0 720.7,275.5 723.3,206.3 724.9,251.4 727.1,189.9 729.7,223.7 731.3,241.7 733.6,195.1 736.1,239.8 737.1,220.5 739.3,269.1 741.9,256.8 742.6,265.5 744.2,264.3 745.8,181.2 748.4,174.8 749.6,250.4 752.2,177.3 753.8,195.7 755.4,198.9 758.0,162.5 760.9,169.0 761.9,118.5 764.5,251.4 767.0,86.3 768.3,298.7 770.9,315.4 772.8,289.0 774.8,194.1 777.3,250.4 779.6,290.0 781.8,331.8 782.8,292.3 785.1,296.4 788.3,277.1 790.2,336.3 791.5,313.8 794.7,358.9 796.0,320.3 797.9,280.3 800.5,281.6 801.8,351.8 804.4,342.8 806.9,339.6 807.6,313.8 810.2,274.5 813.4,255.2 814.0,315.7 816.6,300.3 818.5,316.4 821.1,313.8 823.0,241.4 825.6,259.1 826.2,351.2 829.5,351.8 832.0,332.5 832.7,271.3 835.9,259.1 838.5,318.0 839.8,327.7 842.3,343.7 844.0,356.6 845.6,304.2 849.4,316.4 850.5,307.0 851.0,326.7 853.6,290.4 856.4,335.6 858.6,315.4 860.3,340.1 863.5,342.7 865.4,404.5 867.3,289.9 869.3,260.3 871.5,325.7 873.1,276.7 875.7,297.6 878.3,311.2 879.6,331.4 881.5,262.2 884.1,304.1 885.4,270.3 887.9,302.5 890.5,278.3 891.8,370.1 894.4,306.7 896.3,350.1 898.2,332.4 900.5,338.8 903.7,396.5 904.7,234.9 906.9,349.1 909.2,259.0 911.1,233.3 913.4,342.7 915.6,299.3 916.6,329.2 918.8,272.5 922.1,330.8 923.3,310.5 925.3,377.5 927.8,367.8 929.5,327.3 932.4,324.0 934.9,288.6 935.9,368.5 938.1,355.6 941.4,357.8 942.3,352.4 944.6,288.6 947.2,329.2 948.4,325.0 951.0,356.2 953.6,390.0 955.5,275.1 956.8,340.1 960.0,284.1 961.6,325.0 963.2,340.1 965.8,317.6 968.4,342.7 969.7,222.7 971.6,351.4 974.5,290.2 976.1,374.3 977.7,342.7 980.0,336.3 982.6,231.0 985.1,242.9 986.4,361.4 988.4,312.8 992.3,324.7 994.7,223.7 997.3,347.9 999.8,329.3 1001.1,300.3 1003.7,289.0 1006.3,266.5 1007.6,219.8 1009.5,226.3 1012.1,242.4 1013.3,226.3 1015.9,271.3 1018.5,178.6 1019.8,278.4 1022.4,205.4 1024.9,257.8 1026.2,287.4 1028.2,235.3 1030.7,219.2 1032.7,220.5 1034.6,269.7 1037.2,205.4 1039.7,175.4 1042.3,176.4 1043.9,180.6 1046.2,178.0 1047.5,156.1 1049.4,244.0 1052.0,118.5 1053.6,221.4 1055.8,299.3 1058.4,253.6 1060.0,169.0 1062.3,177.3 1064.8,219.2 1066.1,269.7 1068.7,162.5 1070.6,252.7 1071.9,207.0 1074.5,227.9 1077.1,214.0 1079.0,160.3 1081.6,360.8 1083.5,276.2 1084.8,316.4 1087.4,248.2 1089.9,252.7 1091.2,281.0 1093.8,163.5 1096.4,327.7 1097.7,244.0 1099.6,233.4 1102.2,169.0 1103.5,230.1 1106.0,285.8 1108.6,194.1 1109.9,226.3 1112.5,145.2 1114.7,304.2 1116.3,281.0 1118.3,332.5 1120.8,232.7 1123.4,181.2 1124.7,289.0 1127.2,65.8 1128.0,202.8 1131.0,271.5 1133.6,215.5 1135.9,314.3 1136.8,305.3 1139.1,209.7 1142.3,260.2 1143.3,295.6 1145.8,186.5 1147.8,295.0 1149.7,193.6 1150.3,293.3 1152.9,290.1 1155.2,239.6 1155.5,247.3 1158.1,256.3 1160.6,131.5 1162.6,138.2 1164.5,269.2 1167.1,256.3 1169.7,361.6 1171.3,170.1 1173.5,281.4 1174.5,160.4 1176.7,235.4 1180.0,347.1 1180.9,278.9 1183.2,197.8 1185.8,254.7 1187.4,265.0 1189.6,210.0 1192.2,220.9 1193.5,145.0 1196.1,280.5 1198.0,305.6 1199.3,188.7 1201.8,303.0 1204.4,247.6 1206.7,216.7 1208.9,216.7 1210.9,246.0 1213.1,249.9 1214.7,229.9 1217.3,246.0 1219.5,139.8 1221.2,134.0 1223.7,241.8 1225.7,220.0 1226.9,323.0 1229.5,291.1 1232.1,274.0 1233.4,347.1 1236.0,154.0 1237.9,247.3 1239.8,181.7 1242.4,263.7 1244.3,226.4 1246.3,237.7 1248.5,296.6 1250.8,275.0 1252.1,268.6 1254.6,229.9 1256.6,259.5 1259.1,264.4 1261.4,270.8 1263.0,114.1 1263.6,147.5 1267.3,274.8 1269.9,141.0 1271.2,159.0 1273.1,261.6 1275.4,187.7 1277.6,186.4 1279.5,246.5 1281.5,282.5 1283.4,262.6 1286.0,282.5 1288.2,236.2 1290.5,297.3 1291.8,229.8 1294.7,248.7 1297.9,231.4 1299.5,357.4 1301.1,245.5 1303.3,272.9 1305.3,288.9 1307.5,154.9 1309.8,263.5 1311.1,240.1 1313.6,225.0 1316.2,260.0 1317.5,199.9 1320.1,298.6 1322.0,227.2 1323.9,270.0 1325.8,285.1 1328.4,136.2 1329.7,204.1"/><path d="M480.3 163.7l4 4l-4 4l-4 -4zM482.9 265.2l4 4l-4 4l-4 -4zM483.8 214.7l4 4l-4 4l-4 -4zM486.6 284.8l4 4l-4 4l-4 -4zM489.0 168.6l4 4l-4 4l-4 -4zM490.4 239.5l4 4l-4 4l-4 -4zM493.0 224.8l4 4l-4 4l-4 -4zM495.3 248.2l4 4l-4 4l-4 -4zM496.7 220.5l4 4l-4 4l-4 -4zM498.7 301.2l4 4l-4 4l-4 -4zM501.6 142.1l4 4l-4 4l-4 -4zM503.4 245.3l4 4l-4 4l-4 -4zM506.0 250.2l4 4l-4 4l-4 -4zM507.7 245.9l4 4l-4 4l-4 -4zM509.1 158.5l4 4l-4 4l-4 -4zM510.3 247.3l4 4l-4 4l-4 -4zM514.9 226.3l4 4l-4 4l-4 -4zM514.9 250.8l4 4l-4 4l-4 -4zM518.3 252.5l4 4l-4 4l-4 -4zM520.7 245.0l4 4l-4 4l-4 -4zM521.8 325.1l4 4l-4 4l-4 -4zM524.1 279.6l4 4l-4 4l-4 -4zM527.0 257.4l4 4l-4 4l-4 -4zM529.3 288.5l4 4l-4 4l-4 -4zM530.4 201.2l4 4l-4 4l-4 -4zM532.8 251.6l4 4l-4 4l-4 -4zM535.1 188.5l4 4l-4 4l-4 -4zM536.8 297.2l4 4l-4 4l-4 -4zM539.1 271.2l4 4l-4 4l-4 -4zM541.4 263.7l4 4l-4 4l-4 -4zM542.8 219.9l4 4l-4 4l-4 -4zM545.1 247.3l4 4l-4 4l-4 -4zM547.7 234.9l4 4l-4 4l-4 -4zM548.9 155.1l4 4l-4 4l-4 -4zM551.8 264.6l4 4l-4 4l-4 -4zM554.1 221.4l4 4l-4 4l-4 -4zM555.2 263.1l4 4l-4 4l-4 -4zM558.1 213.6l4 4l-4 4l-4 -4zM560.4 313.6l4 4l-4 4l-4 -4zM561.0 254.5l4 4l-4 4l-4 -4zM563.9 253.1l4 4l-4 4l-4 -4zM565.9 160.8l4 4l-4 4l-4 -4zM567.9 203.5l4 4l-4 4l-4 -4zM569.6 164.6l4 4l-4 4l-4 -4zM574.1 293.6l4 4l-4 4l-4 -4zM574.5 266.2l4 4l-4 4l-4 -4zM576.8 218.8l4 4l-4 4l-4 -4zM578.9 230.3l4 4l-4 4l-4 -4zM580.8 252.8l4 4l-4 4l-4 -4zM583.0 197.2l4 4l-4 4l-4 -4zM585.3 203.0l4 4l-4 4l-4 -4zM587.2 185.3l4 4l-4 4l-4 -4zM589.2 116.1l4 4l-4 4l-4 -4zM591.1 182.7l4 4l-4 4l-4 -4zM593.0 242.5l4 4l-4 4l-4 -4zM595.0 273.8l4 4l-4 4l-4 -4zM597.5 193.3l4 4l-4 4l-4 -4zM599.1 232.6l4 4l-4 4l-4 -4zM601.4 264.1l4 4l-4 4l-4 -4zM604.0 220.0l4 4l-4 4l-4 -4zM605.6 195.9l4 4l-4 4l-4 -4zM607.8 314.0l4 4l-4 4l-4 -4zM610.4 303.4l4 4l-4 4l-4 -4zM613.0 208.8l4 4l-4 4l-4 -4zM614.3 263.5l4 4l-4 4l-4 -4zM616.8 293.1l4 4l-4 4l-4 -4zM619.4 148.9l4 4l-4 4l-4 -4zM621.7 149.9l4 4l-4 4l-4 -4zM623.3 247.4l4 4l-4 4l-4 -4zM625.2 305.0l4 4l-4 4l-4 -4zM626.5 283.4l4 4l-4 4l-4 -4zM629.1 236.1l4 4l-4 4l-4 -4zM631.6 143.4l4 4l-4 4l-4 -4zM632.9 176.6l4 4l-4 4l-4 -4zM635.5 246.4l4 4l-4 4l-4 -4zM638.1 215.2l4 4l-4 4l-4 -4zM639.4 292.4l4 4l-4 4l-4 -4zM641.9 289.9l4 4l-4 4l-4 -4zM644.2 256.7l4 4l-4 4l-4 -4zM645.8 267.3l4 4l-4 4l-4 -4zM647.7 167.6l4 4l-4 4l-4 -4zM650.3 273.8l4 4l-4 4l-4 -4zM651.6 210.0l4 4l-4 4l-4 -4zM654.2 249.6l4 4l-4 4l-4 -4zM656.1 328.5l4 4l-4 4l-4 -4zM658.0 191.7l4 4l-4 4l-4 -4zM660.0 332.3l4 4l-4 4l-4 -4zM662.5 292.4l4 4l-4 4l-4 -4zM664.5 267.3l4 4l-4 4l-4 -4zM667.1 220.7l4 4l-4 4l-4 -4zM669.3 214.5l4 4l-4 4l-4 -4zM670.3 248.7l4 4l-4 4l-4 -4zM672.8 235.1l4 4l-4 4l-4 -4zM675.4 296.3l4 4l-4 4l-4 -4zM676.7 204.9l4 4l-4 4l-4 -4zM679.3 350.4l4 4l-4 4l-4 -4zM681.2 252.8l4 4l-4 4l-4 -4zM683.1 223.9l4 4l-4 4l-4 -4zM686.4 223.9l4 4l-4 4l-4 -4zM688.3 251.2l4 4l-4 4l-4 -4zM691.5 211.0l4 4l-4 4l-4 -4zM694.1 350.4l4 4l-4 4l-4 -4zM696.7 82.3l4 4l-4 4l-4 -4zM697.9 280.2l4 4l-4 4l-4 -4zM700.5 294.7l4 4l-4 4l-4 -4zM703.1 235.1l4 4l-4 4l-4 -4zM704.4 228.7l4 4l-4 4l-4 -4zM707.0 193.9l4 4l-4 4l-4 -4zM709.5 240.0l4 4l-4 4l-4 -4zM711.4 219.1l4 4l-4 4l-4 -4zM713.2 253.8l4 4l-4 4l-4 -4zM715.0 294.5l4 4l-4 4l-4 -4zM715.9 203.0l4 4l-4 4l-4 -4zM719.1 271.5l4 4l-4 4l-4 -4zM721.7 202.3l4 4l-4 4l-4 -4zM723.3 247.4l4 4l-4 4l-4 -4zM725.5 185.9l4 4l-4 4l-4 -4zM728.1 219.7l4 4l-4 4l-4 -4zM729.7 237.7l4 4l-4 4l-4 -4zM732.0 191.1l4 4l-4 4l-4 -4zM734.5 235.8l4 4l-4 4l-4 -4zM735.5 216.5l4 4l-4 4l-4 -4zM737.7 265.1l4 4l-4 4l-4 -4zM740.3 252.8l4 4l-4 4l-4 -4zM741.0 261.5l4 4l-4 4l-4 -4zM742.6 260.3l4 4l-4 4l-4 -4zM744.2 177.2l4 4l-4 4l-4 -4zM746.8 170.8l4 4l-4 4l-4 -4zM748.0 246.4l4 4l-4 4l-4 -4zM750.6 173.3l4 4l-4 4l-4 -4zM752.2 191.7l4 4l-4 4l-4 -4zM753.8 194.9l4 4l-4 4l-4 -4zM756.4 158.5l4 4l-4 4l-4 -4zM759.3 165.0l4 4l-4 4l-4 -4zM760.3 114.5l4 4l-4 4l-4 -4zM762.9 247.4l4 4l-4 4l-4 -4zM765.4 82.3l4 4l-4 4l-4 -4zM766.7 294.7l4 4l-4 4l-4 -4zM769.3 311.4l4 4l-4 4l-4 -4zM771.2 285.0l4 4l-4 4l-4 -4zM775.7 246.4l4 4l-4 4l-4 -4zM778.0 286.0l4 4l-4 4l-4 -4zM780.2 327.8l4 4l-4 4l-4 -4zM781.2 288.3l4 4l-4 4l-4 -4zM783.5 292.4l4 4l-4 4l-4 -4zM786.7 273.1l4 4l-4 4l-4 -4zM788.6 332.3l4 4l-4 4l-4 -4zM789.9 309.8l4 4l-4 4l-4 -4zM793.1 354.9l4 4l-4 4l-4 -4zM794.4 316.3l4 4l-4 4l-4 -4zM796.3 276.3l4 4l-4 4l-4 -4zM798.9 277.6l4 4l-4 4l-4 -4zM800.2 347.8l4 4l-4 4l-4 -4zM802.8 338.8l4 4l-4 4l-4 -4zM805.3 335.6l4 4l-4 4l-4 -4zM806.0 309.8l4 4l-4 4l-4 -4zM808.6 270.5l4 4l-4 4l-4 -4zM811.8 251.2l4 4l-4 4l-4 -4zM812.4 311.7l4 4l-4 4l-4 -4zM815.0 296.3l4 4l-4 4l-4 -4zM816.9 312.4l4 4l-4 4l-4 -4zM819.5 309.8l4 4l-4 4l-4 -4zM821.4 237.4l4 4l-4 4l-4 -4zM824.0 255.1l4 4l-4 4l-4 -4zM824.6 347.2l4 4l-4 4l-4 -4zM827.9 347.8l4 4l-4 4l-4 -4zM830.4 328.5l4 4l-4 4l-4 -4zM831.1 267.3l4 4l-4 4l-4 -4zM834.3 255.1l4 4l-4 4l-4 -4zM836.9 314.0l4 4l-4 4l-4 -4zM838.2 323.7l4 4l-4 4l-4 -4zM840.7 339.7l4 4l-4 4l-4 -4zM842.4 352.6l4 4l-4 4l-4 -4zM844.0 300.2l4 4l-4 4l-4 -4zM847.8 312.4l4 4l-4 4l-4 -4zM848.9 303.0l4 4l-4 4l-4 -4zM849.4 322.7l4 4l-4 4l-4 -4zM852.0 286.4l4 4l-4 4l-4 -4zM854.8 331.6l4 4l-4 4l-4 -4zM857.0 311.4l4 4l-4 4l-4 -4zM858.7 336.1l4 4l-4 4l-4 -4zM861.9 338.7l4 4l-4 4l-4 -4zM863.8 400.5l4 4l-4 4l-4 -4zM865.7 285.9l4 4l-4 4l-4 -4zM867.7 256.3l4 4l-4 4l-4 -4zM869.9 321.7l4 4l-4 4l-4 -4zM871.5 272.7l4 4l-4 4l-4 -4zM874.1 293.6l4 4l-4 4l-4 -4zM876.7 307.2l4 4l-4 4l-4 -4zM878.0 327.4l4 4l-4 4l-4 -4zM879.9 258.2l4 4l-4 4l-4 -4zM882.5 300.1l4 4l-4 4l-4 -4zM883.8 266.3l4 4l-4 4l-4 -4zM886.3 298.5l4 4l-4 4l-4 -4zM888.9 274.3l4 4l-4 4l-4 -4zM890.2 366.1l4 4l-4 4l-4 -4zM892.8 302.7l4 4l-4 4l-4 -4zM894.7 346.1l4 4l-4 4l-4 -4zM896.6 328.4l4 4l-4 4l-4 -4zM898.9 334.8l4 4l-4 4l-4 -4zM902.1 392.5l4 4l-4 4l-4 -4zM903.1 230.9l4 4l-4 4l-4 -4zM905.3 345.1l4 4l-4 4l-4 -4zM907.6 255.0l4 4l-4 4l-4 -4zM909.5 229.3l4 4l-4 4l-4 -4zM911.8 338.7l4 4l-4 4l-4 -4zM914.0 295.3l4 4l-4 4l-4 -4zM915.0 325.2l4 4l-4 4l-4 -4zM917.2 268.5l4 4l-4 4l-4 -4zM920.5 326.8l4 4l-4 4l-4 -4zM921.7 306.5l4 4l-4 4l-4 -4zM923.7 373.5l4 4l-4 4l-4 -4zM926.2 363.8l4 4l-4 4l-4 -4zM927.9 323.3l4 4l-4 4l-4 -4zM930.8 320.0l4 4l-4 4l-4 -4zM933.3 284.6l4 4l-4 4l-4 -4zM934.3 364.5l4 4l-4 4l-4 -4zM936.5 351.6l4 4l-4 4l-4 -4zM939.8 353.8l4 4l-4 4l-4 -4zM940.7 348.4l4 4l-4 4l-4 -4zM943.0 284.6l4 4l-4 4l-4 -4zM945.6 325.2l4 4l-4 4l-4 -4zM946.8 321.0l4 4l-4 4l-4 -4zM949.4 352.2l4 4l-4 4l-4 -4zM952.0 386.0l4 4l-4 4l-4 -4zM953.9 271.1l4 4l-4 4l-4 -4zM955.2 336.1l4 4l-4 4l-4 -4zM958.4 280.1l4 4l-4 4l-4 -4zM960.0 321.0l4 4l-4 4l-4 -4zM961.6 336.1l4 4l-4 4l-4 -4zM964.2 313.6l4 4l-4 4l-4 -4zM966.8 338.7l4 4l-4 4l-4 -4zM968.1 218.7l4 4l-4 4l-4 -4zM970.0 347.4l4 4l-4 4l-4 -4zM972.9 286.2l4 4l-4 4l-4 -4zM974.5 370.3l4 4l-4 4l-4 -4zM976.1 338.7l4 4l-4 4l-4 -4zM978.4 332.3l4 4l-4 4l-4 -4zM981.0 227.0l4 4l-4 4l-4 -4zM983.5 238.9l4 4l-4 4l-4 -4zM984.8 357.4l4 4l-4 4l-4 -4zM986.8 308.8l4 4l-4 4l-4 -4zM990.7 320.7l4 4l-4 4l-4 -4zM993.1 219.7l4 4l-4 4l-4 -4zM995.7 343.9l4 4l-4 4l-4 -4zM998.2 325.3l4 4l-4 4l-4 -4zM999.5 296.3l4 4l-4 4l-4 -4zM1002.1 285.0l4 4l-4 4l-4 -4zM1004.7 262.5l4 4l-4 4l-4 -4zM1006.0 215.8l4 4l-4 4l-4 -4zM1007.9 222.3l4 4l-4 4l-4 -4zM1010.5 238.4l4 4l-4 4l-4 -4zM1011.7 222.3l4 4l-4 4l-4 -4zM1014.3 267.3l4 4l-4 4l-4 -4zM1016.9 174.6l4 4l-4 4l-4 -4zM1018.2 274.4l4 4l-4 4l-4 -4zM1020.8 201.4l4 4l-4 4l-4 -4zM1023.3 253.8l4 4l-4 4l-4 -4zM1024.6 283.4l4 4l-4 4l-4 -4zM1026.6 231.3l4 4l-4 4l-4 -4zM1029.1 215.2l4 4l-4 4l-4 -4zM1031.1 216.5l4 4l-4 4l-4 -4zM1033.0 265.7l4 4l-4 4l-4 -4zM1035.6 201.4l4 4l-4 4l-4 -4zM1038.1 171.4l4 4l-4 4l-4 -4zM1040.7 172.4l4 4l-4 4l-4 -4zM1042.3 176.6l4 4l-4 4l-4 -4zM1044.6 174.0l4 4l-4 4l-4 -4zM1045.9 152.1l4 4l-4 4l-4 -4zM1047.8 240.0l4 4l-4 4l-4 -4zM1050.4 114.5l4 4l-4 4l-4 -4zM1052.0 217.4l4 4l-4 4l-4 -4zM1054.2 295.3l4 4l-4 4l-4 -4zM1056.8 249.6l4 4l-4 4l-4 -4zM1058.4 165.0l4 4l-4 4l-4 -4zM1060.7 173.3l4 4l-4 4l-4 -4zM1063.2 215.2l4 4l-4 4l-4 -4zM1064.5 265.7l4 4l-4 4l-4 -4zM1067.1 158.5l4 4l-4 4l-4 -4zM1069.0 248.7l4 4l-4 4l-4 -4zM1070.3 203.0l4 4l-4 4l-4 -4zM1072.9 223.9l4 4l-4 4l-4 -4zM1075.5 210.0l4 4l-4 4l-4 -4zM1077.4 156.3l4 4l-4 4l-4 -4zM1080.0 356.8l4 4l-4 4l-4 -4zM1081.9 272.2l4 4l-4 4l-4 -4zM1083.2 312.4l4 4l-4 4l-4 -4zM1085.8 244.2l4 4l-4 4l-4 -4zM1088.3 248.7l4 4l-4 4l-4 -4zM1089.6 277.0l4 4l-4 4l-4 -4zM1092.2 159.5l4 4l-4 4l-4 -4zM1094.8 323.7l4 4l-4 4l-4 -4zM1096.1 240.0l4 4l-4 4l-4 -4zM1098.0 229.4l4 4l-4 4l-4 -4zM1100.6 165.0l4 4l-4 4l-4 -4zM1101.9 226.1l4 4l-4 4l-4 -4zM1104.4 281.8l4 4l-4 4l-4 -4zM1107.0 190.1l4 4l-4 4l-4 -4zM1108.3 222.3l4 4l-4 4l-4 -4zM1110.9 141.2l4 4l-4 4l-4 -4zM1113.1 300.2l4 4l-4 4l-4 -4zM1114.7 277.0l4 4l-4 4l-4 -4zM1116.7 328.5l4 4l-4 4l-4 -4zM1119.2 228.7l4 4l-4 4l-4 -4zM1121.8 177.2l4 4l-4 4l-4 -4zM1123.1 285.0l4 4l-4 4l-4 -4zM1126.4 198.8l4 4l-4 4l-4 -4zM1125.6 61.8l4 4l-4 4l-4 -4zM1129.4 267.5l4 4l-4 4l-4 -4zM1132.0 211.5l4 4l-4 4l-4 -4zM1134.3 310.3l4 4l-4 4l-4 -4zM1135.2 301.3l4 4l-4 4l-4 -4zM1137.5 205.7l4 4l-4 4l-4 -4zM1140.7 256.2l4 4l-4 4l-4 -4zM1141.7 291.6l4 4l-4 4l-4 -4zM1144.2 182.5l4 4l-4 4l-4 -4zM1146.2 291.0l4 4l-4 4l-4 -4zM1148.1 189.6l4 4l-4 4l-4 -4zM1148.7 289.3l4 4l-4 4l-4 -4zM1151.3 286.1l4 4l-4 4l-4 -4zM1153.6 235.6l4 4l-4 4l-4 -4zM1153.9 243.3l4 4l-4 4l-4 -4zM1156.5 252.3l4 4l-4 4l-4 -4zM1159.0 127.5l4 4l-4 4l-4 -4zM1161.0 134.2l4 4l-4 4l-4 -4zM1162.9 265.2l4 4l-4 4l-4 -4zM1165.5 252.3l4 4l-4 4l-4 -4zM1168.1 357.6l4 4l-4 4l-4 -4zM1169.7 166.1l4 4l-4 4l-4 -4zM1171.9 277.4l4 4l-4 4l-4 -4zM1172.9 156.4l4 4l-4 4l-4 -4zM1175.1 231.4l4 4l-4 4l-4 -4zM1178.4 343.1l4 4l-4 4l-4 -4zM1179.3 274.9l4 4l-4 4l-4 -4zM1181.6 193.8l4 4l-4 4l-4 -4zM1184.2 250.7l4 4l-4 4l-4 -4zM1185.8 261.0l4 4l-4 4l-4 -4zM1188.0 206.0l4 4l-4 4l-4 -4zM1190.6 216.9l4 4l-4 4l-4 -4zM1191.9 141.0l4 4l-4 4l-4 -4zM1194.5 276.5l4 4l-4 4l-4 -4zM1196.4 301.6l4 4l-4 4l-4 -4zM1197.7 184.7l4 4l-4 4l-4 -4zM1200.2 299.0l4 4l-4 4l-4 -4zM1202.8 243.6l4 4l-4 4l-4 -4zM1205.1 212.7l4 4l-4 4l-4 -4zM1207.3 212.7l4 4l-4 4l-4 -4zM1209.3 242.0l4 4l-4 4l-4 -4zM1211.5 245.9l4 4l-4 4l-4 -4zM1213.1 225.9l4 4l-4 4l-4 -4zM1215.7 242.0l4 4l-4 4l-4 -4zM1217.9 135.8l4 4l-4 4l-4 -4zM1219.6 130.0l4 4l-4 4l-4 -4zM1222.1 237.8l4 4l-4 4l-4 -4zM1224.1 216.0l4 4l-4 4l-4 -4zM1225.3 319.0l4 4l-4 4l-4 -4zM1227.9 287.1l4 4l-4 4l-4 -4zM1230.5 270.0l4 4l-4 4l-4 -4zM1231.8 343.1l4 4l-4 4l-4 -4zM1234.4 150.0l4 4l-4 4l-4 -4zM1236.3 243.3l4 4l-4 4l-4 -4zM1238.2 177.7l4 4l-4 4l-4 -4zM1240.8 259.7l4 4l-4 4l-4 -4zM1242.7 222.4l4 4l-4 4l-4 -4zM1244.7 233.7l4 4l-4 4l-4 -4zM1246.9 292.6l4 4l-4 4l-4 -4zM1249.2 271.0l4 4l-4 4l-4 -4zM1250.5 264.6l4 4l-4 4l-4 -4zM1253.0 225.9l4 4l-4 4l-4 -4zM1255.0 255.5l4 4l-4 4l-4 -4zM1257.5 260.4l4 4l-4 4l-4 -4zM1259.8 266.8l4 4l-4 4l-4 -4zM1261.4 110.1l4 4l-4 4l-4 -4zM1262.0 143.5l4 4l-4 4l-4 -4zM1265.7 270.8l4 4l-4 4l-4 -4zM1268.3 137.0l4 4l-4 4l-4 -4zM1269.6 155.0l4 4l-4 4l-4 -4zM1271.5 257.6l4 4l-4 4l-4 -4zM1273.8 183.7l4 4l-4 4l-4 -4zM1276.0 182.4l4 4l-4 4l-4 -4zM1277.9 242.5l4 4l-4 4l-4 -4zM1279.9 278.5l4 4l-4 4l-4 -4zM1281.8 258.6l4 4l-4 4l-4 -4zM1284.4 278.5l4 4l-4 4l-4 -4zM1286.6 232.2l4 4l-4 4l-4 -4zM1288.9 293.3l4 4l-4 4l-4 -4zM1290.2 225.8l4 4l-4 4l-4 -4zM1293.1 244.7l4 4l-4 4l-4 -4zM1296.3 227.4l4 4l-4 4l-4 -4zM1297.9 353.4l4 4l-4 4l-4 -4zM1299.5 241.5l4 4l-4 4l-4 -4zM1301.7 268.9l4 4l-4 4l-4 -4zM1303.7 284.9l4 4l-4 4l-4 -4zM1305.9 150.9l4 4l-4 4l-4 -4zM1308.2 259.5l4 4l-4 4l-4 -4zM1309.5 236.1l4 4l-4 4l-4 -4zM1312.0 221.0l4 4l-4 4l-4 -4zM1314.6 256.0l4 4l-4 4l-4 -4zM1315.9 195.9l4 4l-4 4l-4 -4zM1318.5 294.6l4 4l-4 4l-4 -4zM1320.4 223.2l4 4l-4 4l-4 -4zM1322.3 266.0l4 4l-4 4l-4 -4zM1324.2 281.1l4 4l-4 4l-4 -4zM1326.8 132.2l4 4l-4 4l-4 -4zM1328.1 200.1l4 4l-4 4l-4 -4z" fill="#0000ff"/><path d="M773.2 190.1l4 4l-4 4l-4 -4z" fill="#ff0000"/></svg>
<div class="t" style="left:462.50px;top:512.15px;font-size:14px;color:#000;transform:scale(0.8978,1.0);">0</div>
<div class="t" style="left:448.50px;top:463.39px;font-size:14px;color:#000;transform:scale(0.8990,1.0);">100</div>
<div class="t" style="left:448.50px;top:414.13px;font-size:14px;color:#000;transform:scale(0.8990,1.0);">200</div>
<div class="t" style="left:448.50px;top:364.87px;font-size:14px;color:#000;transform:scale(0.8990,1.0);">300</div>
<div class="t" style="left:448.50px;top:315.61px;font-size:14px;color:#000;transform:scale(0.8990,1.0);">400</div>
<div class="t" style="left:448.50px;top:266.35px;font-size:14px;color:#000;transform:scale(0.8990,1.0);">500</div>
<div class="t" style="left:448.50px;top:217.09px;font-size:14px;color:#000;transform:scale(0.8990,1.0);">600</div>
<div class="t" style="left:448.50px;top:167.83px;font-size:14px;color:#000;transform:scale(0.8990,1.0);">700</div>
<div class="t" style="left:448.50px;top:118.57px;font-size:14px;color:#000;transform:scale(0.8990,1.0);">800</div>
<div class="t" style="left:481.00px;top:529.33px;font-size:14.5px;color:#000;transform:scale(0.8665,1.0);">0</div>
<div class="t" style="left:538.51px;top:529.33px;font-size:14.5px;color:#000;transform:scale(0.8674,1.0);">30</div>
<div class="t" style="left:601.31px;top:529.33px;font-size:14.5px;color:#000;transform:scale(0.8674,1.0);">60</div>
<div class="t" style="left:664.12px;top:529.33px;font-size:14.5px;color:#000;transform:scale(0.8674,1.0);">90</div>
<div class="t" style="left:723.42px;top:529.33px;font-size:14.5px;color:#000;transform:scale(0.8677,1.0);">120</div>
<div class="t" style="left:786.23px;top:529.33px;font-size:14.5px;color:#000;transform:scale(0.8677,1.0);">150</div>
<div class="t" style="left:849.03px;top:529.33px;font-size:14.5px;color:#000;transform:scale(0.8677,1.0);">180</div>
<div class="t" style="left:911.84px;top:529.33px;font-size:14.5px;color:#000;transform:scale(0.8677,1.0);">210</div>
<div class="t" style="left:974.64px;top:529.33px;font-size:14.5px;color:#000;transform:scale(0.8677,1.0);">240</div>
<div class="t" style="left:1037.44px;top:529.33px;font-size:14.5px;color:#000;transform:scale(0.8677,1.0);">270</div>
<div class="t" style="left:1100.25px;top:529.33px;font-size:14.5px;color:#000;transform:scale(0.8677,1.0);">300</div>
<div class="t" style="left:1163.06px;top:529.33px;font-size:14.5px;color:#000;transform:scale(0.8677,1.0);">330</div>
<div class="t" style="left:1225.86px;top:529.33px;font-size:14.5px;color:#000;transform:scale(0.8677,1.0);">360</div>
<div class="t" style="left:1288.67px;top:529.33px;font-size:14.5px;color:#000;transform:scale(0.8677,1.0);">390</div>
<div class="t" style="left:428.00px;top:551.07px;font-size:13.5px;color:#000;word-spacing:2px;transform:scale(0.9961,1.0);">Exp=144msec / Frm No.140.0 / Frm Mid= 15h44m50.6778s,  End= 50.7498s</div>
<div class="t" style="left:417.80px;top:586.57px;font-size:13.5px;color:#000;transform:scale(1.0906,1.0);">Current-</div>
<div class="t" style="left:428.60px;top:606.27px;font-size:13.5px;color:#000;transform:scale(0.9893,1.0);">Frame</div>
<div class="t" style="left:493.60px;top:586.57px;font-size:13.5px;color:#000;transform:scale(0.9975,1.0);">Luminous</div>
<div class="t" style="left:493.20px;top:606.27px;font-size:13.5px;color:#000;transform:scale(1.0660,1.0);">Intensity</div>
<div class="a" style="left:418px;top:626px;width:60px;height:23px;background:#fff;border-top:1px solid #a0a0a0;border-left:1px solid #a0a0a0;border-bottom:1px solid #fff;border-right:1px solid #fff;box-sizing:border-box;"></div>
<div class="a" style="left:419px;top:627px;width:58px;height:21px;border-top:1px solid #696969;border-left:1px solid #696969;border-bottom:1px solid #e3e3e3;border-right:1px solid #e3e3e3;box-sizing:border-box;"></div>
<div class="t" style="left:422.90px;top:630.20px;font-size:13px;color:#000;transform:scale(0.9433,1.0);">140.0</div>
<div class="a" style="left:488px;top:626px;width:70px;height:23px;background:#fff;border-top:1px solid #a0a0a0;border-left:1px solid #a0a0a0;border-bottom:1px solid #fff;border-right:1px solid #fff;box-sizing:border-box;"></div>
<div class="a" style="left:489px;top:627px;width:68px;height:21px;border-top:1px solid #696969;border-left:1px solid #696969;border-bottom:1px solid #e3e3e3;border-right:1px solid #e3e3e3;box-sizing:border-box;"></div>
<div class="t" style="left:492.00px;top:630.20px;font-size:13px;color:#000;transform:scale(0.9648,1.0);">665.4</div>
<div class="a" style="left:418px;top:662px;width:15px;height:15px;background:#fff;border-top:1px solid #a0a0a0;border-left:1px solid #a0a0a0;border-bottom:1px solid #fff;border-right:1px solid #fff;box-sizing:border-box;"></div>
<div class="a" style="left:419px;top:663px;width:13px;height:13px;border-top:1px solid #696969;border-left:1px solid #696969;border-bottom:1px solid #e3e3e3;border-right:1px solid #e3e3e3;box-sizing:border-box;"></div>
<svg class="a" style="left:418px;top:662px" width="15" height="15" viewBox="0 0 13 13"><path d="M3 6.2 L5.2 8.6 L10 3.6" stroke="#000" stroke-width="2.1" fill="none"/></svg>
<div class="t" style="left:439.80px;top:662.97px;font-size:13.5px;color:#000;word-spacing:2px;transform:scale(1.0162,1.0);">Show Image of Clicked point</div>
<div class="a" style="left:418px;top:682px;width:15px;height:15px;background:#fff;border-top:1px solid #a0a0a0;border-left:1px solid #a0a0a0;border-bottom:1px solid #fff;border-right:1px solid #fff;box-sizing:border-box;"></div>
<div class="a" style="left:419px;top:683px;width:13px;height:13px;border-top:1px solid #696969;border-left:1px solid #696969;border-bottom:1px solid #e3e3e3;border-right:1px solid #e3e3e3;box-sizing:border-box;"></div>
<div class="t" style="left:440.70px;top:682.87px;font-size:13.5px;color:#000;word-spacing:2px;transform:scale(1.0351,1.0);">Reproduce Aperture Position</div>
<div class="a" style="left:567px;top:588px;width:200px;height:22px;background:#f3f3f3;"></div>
<div class="a" style="left:567px;top:588px;width:20px;height:22px;background:#f0f0f0;border-top:1px solid #fff;border-left:1px solid #fff;border-bottom:1px solid #696969;border-right:1px solid #696969;box-sizing:border-box;"></div>
<div class="a" style="left:568px;top:589px;width:18px;height:20px;border-bottom:1px solid #a0a0a0;border-right:1px solid #a0a0a0;box-sizing:border-box;"></div>
<div class="a" style="left:587px;top:588px;width:22px;height:22px;background:#f0f0f0;border-top:1px solid #fff;border-left:1px solid #fff;border-bottom:1px solid #696969;border-right:1px solid #696969;box-sizing:border-box;"></div>
<div class="a" style="left:588px;top:589px;width:20px;height:20px;border-bottom:1px solid #a0a0a0;border-right:1px solid #a0a0a0;box-sizing:border-box;"></div>
<div class="a" style="left:745.5px;top:588px;width:21.5px;height:22px;background:#f0f0f0;border-top:1px solid #fff;border-left:1px solid #fff;border-bottom:1px solid #696969;border-right:1px solid #696969;box-sizing:border-box;"></div>
<div class="a" style="left:746.5px;top:589px;width:19.5px;height:20px;border-bottom:1px solid #a0a0a0;border-right:1px solid #a0a0a0;box-sizing:border-box;"></div>
<svg class="a" style="left:567px;top:588px" width="200" height="22" viewBox="567 588 200 22"><path d="M574 599 l5 -5 v10z" fill="#000"/><path d="M760 599 l-5 -5 v10z" fill="#000"/></svg>
<div class="a" style="left:568px;top:619px;width:51.299999999999955px;height:31px;background:#f0f0f0;border-top:1px solid #fff;border-left:1px solid #fff;border-bottom:1px solid #696969;border-right:1px solid #696969;box-sizing:border-box;"></div>
<div class="a" style="left:569px;top:620px;width:49.299999999999955px;height:29px;border-bottom:1px solid #a0a0a0;border-right:1px solid #a0a0a0;box-sizing:border-box;"></div>
<div class="t" style="left:572.65px;top:627.77px;font-size:13.5px;color:#000;transform:scale(0.9817,1.0);">-10Sec</div>
<div class="a" style="left:622.5px;top:619px;width:41.5px;height:31px;background:#f0f0f0;border-top:1px solid #fff;border-left:1px solid #fff;border-bottom:1px solid #696969;border-right:1px solid #696969;box-sizing:border-box;"></div>
<div class="a" style="left:623.5px;top:620px;width:39.5px;height:29px;border-bottom:1px solid #a0a0a0;border-right:1px solid #a0a0a0;box-sizing:border-box;"></div>
<div class="t" style="left:626.05px;top:627.77px;font-size:13.5px;color:#000;transform:scale(0.9750,1.0);">-1Sec</div>
<div class="a" style="left:668px;top:619px;width:44px;height:31px;background:#f0f0f0;border-top:1px solid #fff;border-left:1px solid #fff;border-bottom:1px solid #696969;border-right:1px solid #696969;box-sizing:border-box;"></div>
<div class="a" style="left:669px;top:620px;width:42px;height:29px;border-bottom:1px solid #a0a0a0;border-right:1px solid #a0a0a0;box-sizing:border-box;"></div>
<div class="t" style="left:671.00px;top:627.77px;font-size:13.5px;color:#000;transform:scale(0.9830,1.0);">+1Sec</div>
<div class="a" style="left:715.6px;top:619px;width:51.39999999999998px;height:31px;background:#f0f0f0;border-top:1px solid #fff;border-left:1px solid #fff;border-bottom:1px solid #696969;border-right:1px solid #696969;box-sizing:border-box;"></div>
<div class="a" style="left:716.6px;top:620px;width:49.39999999999998px;height:29px;border-bottom:1px solid #a0a0a0;border-right:1px solid #a0a0a0;box-sizing:border-box;"></div>
<div class="t" style="left:718.30px;top:627.77px;font-size:13.5px;color:#000;transform:scale(0.9963,1.0);">+10Sec</div>
<div class="t" style="left:775.00px;top:596.17px;font-size:13.5px;color:#000;transform:scale(1.0183,1.0);">Scale</div>
<div class="a" style="left:823px;top:586px;width:27px;height:23.5px;background:#fff;border-top:1px solid #a0a0a0;border-left:1px solid #a0a0a0;border-bottom:1px solid #fff;border-right:1px solid #fff;box-sizing:border-box;"></div>
<div class="a" style="left:824px;top:587px;width:25px;height:21.5px;border-top:1px solid #696969;border-left:1px solid #696969;border-bottom:1px solid #e3e3e3;border-right:1px solid #e3e3e3;box-sizing:border-box;"></div>
<div class="t" style="left:828.30px;top:589.70px;font-size:13px;color:#000;">1</div>
<div class="t" style="left:778.80px;top:626.07px;font-size:13.5px;color:#000;transform:scale(0.9850,1.0);">Radius</div>
<div class="a" style="left:823px;top:626px;width:27px;height:22.5px;background:#fff;border-top:1px solid #a0a0a0;border-left:1px solid #a0a0a0;border-bottom:1px solid #fff;border-right:1px solid #fff;box-sizing:border-box;"></div>
<div class="a" style="left:824px;top:627px;width:25px;height:20.5px;border-top:1px solid #696969;border-left:1px solid #696969;border-bottom:1px solid #e3e3e3;border-right:1px solid #e3e3e3;box-sizing:border-box;"></div>
<div class="t" style="left:828.30px;top:630.00px;font-size:13px;color:#000;">3</div>
<div class="a" style="left:853px;top:585px;width:21px;height:14px;background:#f0f0f0;border-top:1px solid #fff;border-left:1px solid #fff;border-bottom:1px solid #696969;border-right:1px solid #696969;box-sizing:border-box;"></div>
<div class="a" style="left:854px;top:586px;width:19px;height:12px;border-bottom:1px solid #a0a0a0;border-right:1px solid #a0a0a0;box-sizing:border-box;"></div>
<div class="a" style="left:853px;top:599px;width:21px;height:14.5px;background:#f0f0f0;border-top:1px solid #fff;border-left:1px solid #fff;border-bottom:1px solid #696969;border-right:1px solid #696969;box-sizing:border-box;"></div>
<div class="a" style="left:854px;top:600px;width:19px;height:12.5px;border-bottom:1px solid #a0a0a0;border-right:1px solid #a0a0a0;box-sizing:border-box;"></div>
<svg class="a" style="left:853px;top:585px" width="21" height="29"><path d="M6.5 9 l4 -4 l4 4z M6.5 19 l4 4 l4 -4z" fill="#000"/></svg>
<div class="a" style="left:853px;top:625px;width:21px;height:14px;background:#f0f0f0;border-top:1px solid #fff;border-left:1px solid #fff;border-bottom:1px solid #696969;border-right:1px solid #696969;box-sizing:border-box;"></div>
<div class="a" style="left:854px;top:626px;width:19px;height:12px;border-bottom:1px solid #a0a0a0;border-right:1px solid #a0a0a0;box-sizing:border-box;"></div>
<div class="a" style="left:853px;top:639px;width:21px;height:14.5px;background:#f0f0f0;border-top:1px solid #fff;border-left:1px solid #fff;border-bottom:1px solid #696969;border-right:1px solid #696969;box-sizing:border-box;"></div>
<div class="a" style="left:854px;top:640px;width:19px;height:12.5px;border-bottom:1px solid #a0a0a0;border-right:1px solid #a0a0a0;box-sizing:border-box;"></div>
<svg class="a" style="left:853px;top:625px" width="21" height="29"><path d="M6.5 9 l4 -4 l4 4z M6.5 19 l4 4 l4 -4z" fill="#000"/></svg>
<div class="a" style="left:636px;top:659.5px;width:91px;height:30.5px;background:#f0f0f0;border:1px solid #000;box-sizing:border-box;"></div>
<div class="a" style="left:637px;top:660.5px;width:89px;height:28.5px;border-top:1px solid #fff;border-left:1px solid #fff;border-bottom:1px solid #696969;border-right:1px solid #696969;box-sizing:border-box;"></div>
<div class="a" style="left:638px;top:661.5px;width:87px;height:26.5px;border-bottom:1px solid #a0a0a0;border-right:1px solid #a0a0a0;box-sizing:border-box;"></div>
<div class="a" style="left:640px;top:663.5px;width:83px;height:22.5px;border:1px dotted #000;box-sizing:border-box;"></div>
<div class="t" style="left:644.75px;top:667.67px;font-size:13.5px;color:#000;word-spacing:2px;transform:scale(0.9926,1.0);">Save Image</div>
<div class="a" style="left:733px;top:660px;width:148px;height:30px;background:#f0f0f0;border-top:1px solid #fff;border-left:1px solid #fff;border-bottom:1px solid #696969;border-right:1px solid #696969;box-sizing:border-box;"></div>
<div class="a" style="left:734px;top:661px;width:146px;height:28px;border-bottom:1px solid #a0a0a0;border-right:1px solid #a0a0a0;box-sizing:border-box;"></div>
<div class="t" style="left:748.60px;top:667.67px;font-size:13.5px;color:#000;word-spacing:2px;transform:scale(1.0356,1.0);">Copy to ClipBoard</div>
<div class="a" style="left:881px;top:587px;width:62px;height:101px;border:1px solid #a0a0a0;box-sizing:border-box;"></div>
<div class="a" style="left:882px;top:588px;width:61px;height:100px;border-left:1px solid #fff;border-top:1px solid #fff;box-sizing:border-box;"></div>
<div class="a" style="left:881px;top:587px;width:63px;height:102px;border-right:1px solid #fff;border-bottom:1px solid #fff;box-sizing:border-box;"></div>
<div class="t" style="left:890.90px;top:581.07px;font-size:13.5px;color:#000;word-spacing:2px;transform:scale(1.0438,1.0);background:#f0f0f0;padding:0 1px;margin-left:-1px;">Y Axis</div>
<div class="t" style="left:888.70px;top:596.17px;font-size:13.5px;color:#000;transform:scale(0.9648,1.0);">Min</div>
<div class="t" style="left:913.80px;top:596.17px;font-size:13.5px;color:#000;transform:scale(0.9680,1.0);">Max</div>
<div class="a" style="left:887px;top:609.5px;width:21px;height:21.5px;background:#f0f0f0;border-top:1px solid #fff;border-left:1px solid #fff;border-bottom:1px solid #696969;border-right:1px solid #696969;box-sizing:border-box;"></div>
<div class="a" style="left:888px;top:610.5px;width:19px;height:19.5px;border-bottom:1px solid #a0a0a0;border-right:1px solid #a0a0a0;box-sizing:border-box;"></div>
<div class="a" style="left:887px;top:633.5px;width:21px;height:20.5px;background:#f0f0f0;border-top:1px solid #fff;border-left:1px solid #fff;border-bottom:1px solid #696969;border-right:1px solid #696969;box-sizing:border-box;"></div>
<div class="a" style="left:888px;top:634.5px;width:19px;height:18.5px;border-bottom:1px solid #a0a0a0;border-right:1px solid #a0a0a0;box-sizing:border-box;"></div>
<div class="a" style="left:887px;top:660px;width:21px;height:21px;background:#f0f0f0;border-top:1px solid #fff;border-left:1px solid #fff;border-bottom:1px solid #696969;border-right:1px solid #696969;box-sizing:border-box;"></div>
<div class="a" style="left:888px;top:661px;width:19px;height:19px;border-bottom:1px solid #a0a0a0;border-right:1px solid #a0a0a0;box-sizing:border-box;"></div>
<svg class="a" style="left:887px;top:609px" width="21" height="73"><path d="M6 14.5 l4.75 -5 l4.75 5z M6 59 l4.75 5 l4.75 -5z" fill="#000"/></svg>
<div class="a" style="left:915px;top:609.5px;width:21px;height:21.5px;background:#f0f0f0;border-top:1px solid #fff;border-left:1px solid #fff;border-bottom:1px solid #696969;border-right:1px solid #696969;box-sizing:border-box;"></div>
<div class="a" style="left:916px;top:610.5px;width:19px;height:19.5px;border-bottom:1px solid #a0a0a0;border-right:1px solid #a0a0a0;box-sizing:border-box;"></div>
<div class="a" style="left:915px;top:633.5px;width:21px;height:20.5px;background:#f0f0f0;border-top:1px solid #fff;border-left:1px solid #fff;border-bottom:1px solid #696969;border-right:1px solid #696969;box-sizing:border-box;"></div>
<div class="a" style="left:916px;top:634.5px;width:19px;height:18.5px;border-bottom:1px solid #a0a0a0;border-right:1px solid #a0a0a0;box-sizing:border-box;"></div>
<div class="a" style="left:915px;top:660px;width:21px;height:21px;background:#f0f0f0;border-top:1px solid #fff;border-left:1px solid #fff;border-bottom:1px solid #696969;border-right:1px solid #696969;box-sizing:border-box;"></div>
<div class="a" style="left:916px;top:661px;width:19px;height:19px;border-bottom:1px solid #a0a0a0;border-right:1px solid #a0a0a0;box-sizing:border-box;"></div>
<svg class="a" style="left:915px;top:609px" width="21" height="73"><path d="M6 14.5 l4.75 -5 l4.75 5z M6 59 l4.75 5 l4.75 -5z" fill="#000"/></svg>
<div class="a" style="left:946.5px;top:587px;width:75px;height:66px;border:1px solid #a0a0a0;box-sizing:border-box;"></div>
<div class="a" style="left:947.5px;top:588px;width:74px;height:65px;border-left:1px solid #fff;border-top:1px solid #fff;box-sizing:border-box;"></div>
<div class="a" style="left:946.5px;top:587px;width:76px;height:67px;border-right:1px solid #fff;border-bottom:1px solid #fff;box-sizing:border-box;"></div>
<div class="t" style="left:956.50px;top:581.07px;font-size:13.5px;color:#000;transform:scale(0.9400,1.0);background:#f0f0f0;padding:0 1px;margin-left:-1px;">Line</div>
<div class="a" style="left:956.5px;top:598px;width:13.5px;height:13.5px;background:#fff;border-top:1px solid #a0a0a0;border-left:1px solid #a0a0a0;border-bottom:1px solid #fff;border-right:1px solid #fff;box-sizing:border-box;"></div>
<div class="a" style="left:957.5px;top:599px;width:11.5px;height:11.5px;border-top:1px solid #696969;border-left:1px solid #696969;border-bottom:1px solid #e3e3e3;border-right:1px solid #e3e3e3;box-sizing:border-box;"></div>
<svg class="a" style="left:956.5px;top:598px" width="13.5" height="13.5" viewBox="0 0 13 13"><path d="M3 6.2 L5.2 8.6 L10 3.6" stroke="#000" stroke-width="2.1" fill="none"/></svg>
<div class="t" style="left:978.90px;top:596.97px;font-size:13.5px;color:#000;transform:scale(1.0582,1.0);">Axis</div>
<div class="a" style="left:956.5px;top:615px;width:13.5px;height:13.5px;background:#fff;border-top:1px solid #a0a0a0;border-left:1px solid #a0a0a0;border-bottom:1px solid #fff;border-right:1px solid #fff;box-sizing:border-box;"></div>
<div class="a" style="left:957.5px;top:616px;width:11.5px;height:11.5px;border-top:1px solid #696969;border-left:1px solid #696969;border-bottom:1px solid #e3e3e3;border-right:1px solid #e3e3e3;box-sizing:border-box;"></div>
<svg class="a" style="left:956.5px;top:615px" width="13.5" height="13.5" viewBox="0 0 13 13"><path d="M3 6.2 L5.2 8.6 L10 3.6" stroke="#000" stroke-width="2.1" fill="none"/></svg>
<div class="t" style="left:978.90px;top:615.37px;font-size:13.5px;color:#000;transform:scale(0.9814,1.0);">Data</div>
<div class="a" style="left:956px;top:630.5px;width:57px;height:18px;background:#f0f0f0;border-top:1px solid #fff;border-left:1px solid #fff;border-bottom:1px solid #696969;border-right:1px solid #696969;box-sizing:border-box;"></div>
<div class="a" style="left:957px;top:631.5px;width:55px;height:16px;border-bottom:1px solid #a0a0a0;border-right:1px solid #a0a0a0;box-sizing:border-box;"></div>
<div class="t" style="left:963.90px;top:632.07px;font-size:13.5px;color:#000;transform:scale(1.0502,1.0);">Hilight</div>
<div class="a" style="left:1026px;top:587px;width:69.5px;height:66px;border:1px solid #a0a0a0;box-sizing:border-box;"></div>
<div class="a" style="left:1027px;top:588px;width:68.5px;height:65px;border-left:1px solid #fff;border-top:1px solid #fff;box-sizing:border-box;"></div>
<div class="a" style="left:1026px;top:587px;width:70.5px;height:67px;border-right:1px solid #fff;border-bottom:1px solid #fff;box-sizing:border-box;"></div>
<div class="t" style="left:1036.20px;top:582.27px;font-size:13.5px;color:#000;transform:scale(1.0024,1.0);background:#f0f0f0;padding:0 1px;margin-left:-1px;">Width</div>
<svg class="a" style="left:1037.5px;top:603.5px" width="13" height="13" viewBox="-6.5 -6.5 13 13"><circle cx="0" cy="0" r="5.6" fill="#fff"/><path d="M4.1 -4.1 A5.8 5.8 0 0 0 -4.1 4.1" stroke="#7c7c7c" stroke-width="1.7" fill="none"/><path d="M3.3 -3.3 A4.7 4.7 0 0 0 -3.3 3.3" stroke="#b8b8b8" stroke-width="0.8" fill="none"/></svg>
<div class="t" style="left:1058.70px;top:603.57px;font-size:13.5px;color:#000;transform:scale(0.9408,1.0);">Part</div>
<svg class="a" style="left:1037.5px;top:630.0px" width="13" height="13" viewBox="-6.5 -6.5 13 13"><circle cx="0" cy="0" r="5.6" fill="#fff"/><path d="M4.1 -4.1 A5.8 5.8 0 0 0 -4.1 4.1" stroke="#7c7c7c" stroke-width="1.7" fill="none"/><path d="M3.3 -3.3 A4.7 4.7 0 0 0 -3.3 3.3" stroke="#b8b8b8" stroke-width="0.8" fill="none"/><circle cx="0" cy="0" r="2.2" fill="#000"/></svg>
<div class="t" style="left:1058.70px;top:630.07px;font-size:13.5px;color:#000;transform:scale(0.9467,1.0);">Entire</div>
<div class="a" style="left:946.5px;top:659.3px;width:80px;height:34px;background:#f0f0f0;border-top:1px solid #fff;border-left:1px solid #fff;border-bottom:1px solid #696969;border-right:1px solid #696969;box-sizing:border-box;"></div>
<div class="a" style="left:947.5px;top:660.3px;width:78px;height:32px;border-bottom:1px solid #a0a0a0;border-right:1px solid #a0a0a0;box-sizing:border-box;"></div>
<div class="t" style="left:951.00px;top:668.47px;font-size:13.5px;color:#000;word-spacing:2px;transform:scale(1.0142,1.0);">[3D] Image</div>
<div class="a" style="left:1103.4px;top:584.7px;width:178.3px;height:21.3px;background:#f0f0f0;border-top:1px solid #fff;border-left:1px solid #fff;border-bottom:1px solid #696969;border-right:1px solid #696969;box-sizing:border-box;"></div>
<div class="a" style="left:1104.4px;top:585.7px;width:176.3px;height:19.3px;border-bottom:1px solid #a0a0a0;border-right:1px solid #a0a0a0;box-sizing:border-box;"></div>
<div class="t" style="left:1111.55px;top:587.57px;font-size:13.5px;color:#000;word-spacing:2px;transform:scale(1.0467,1.0);">Correction for absorption</div>
<div class="a" style="left:1103.4px;top:609.6px;width:128.2px;height:21.4px;background:#f0f0f0;border-top:1px solid #fff;border-left:1px solid #fff;border-bottom:1px solid #696969;border-right:1px solid #696969;box-sizing:border-box;"></div>
<div class="a" style="left:1104.4px;top:610.6px;width:126.19999999999999px;height:19.4px;border-bottom:1px solid #a0a0a0;border-right:1px solid #a0a0a0;box-sizing:border-box;"></div>
<div class="t" style="left:1116.45px;top:613.67px;font-size:13.5px;color:#000;word-spacing:2px;transform:scale(1.0241,1.0);">Noise Reduction</div>
<div class="a" style="left:1235.7px;top:609.6px;width:46px;height:21.4px;background:#f0f0f0;border-top:1px solid #fff;border-left:1px solid #fff;border-bottom:1px solid #696969;border-right:1px solid #696969;box-sizing:border-box;"></div>
<div class="a" style="left:1236.7px;top:610.6px;width:44px;height:19.4px;border-bottom:1px solid #a0a0a0;border-right:1px solid #a0a0a0;box-sizing:border-box;"></div>
<div class="t" style="left:1240.55px;top:612.57px;font-size:13.5px;color:#000;transform:scale(1.0062,1.0);">Reset</div>
<div class="a" style="left:1298.6px;top:585.3px;width:43.7px;height:29.4px;background:#f0f0f0;border-top:1px solid #fff;border-left:1px solid #fff;border-bottom:1px solid #696969;border-right:1px solid #696969;box-sizing:border-box;"></div>
<div class="a" style="left:1299.6px;top:586.3px;width:41.7px;height:27.4px;border-bottom:1px solid #a0a0a0;border-right:1px solid #a0a0a0;box-sizing:border-box;"></div>
<div class="t" style="left:1302.65px;top:592.57px;font-size:13.5px;color:#000;transform:scale(1.0566,1.0);">close</div>
<div class="a" style="left:1101.5px;top:636px;width:14px;height:14px;background:#fff;border-top:1px solid #a0a0a0;border-left:1px solid #a0a0a0;border-bottom:1px solid #fff;border-right:1px solid #fff;box-sizing:border-box;"></div>
<div class="a" style="left:1102.5px;top:637px;width:12px;height:12px;border-top:1px solid #696969;border-left:1px solid #696969;border-bottom:1px solid #e3e3e3;border-right:1px solid #e3e3e3;box-sizing:border-box;"></div>
<svg class="a" style="left:1101.5px;top:636px" width="14" height="14" viewBox="0 0 13 13"><path d="M3 6.2 L5.2 8.6 L10 3.6" stroke="#000" stroke-width="2.1" fill="none"/></svg>
<div class="t" style="left:1123.40px;top:635.57px;font-size:13.5px;color:#000;transform:scale(0.9623,1.0);">Information</div>
<div class="a" style="left:1226px;top:648.3px;width:117.5px;height:44.2px;border:1px solid #a0a0a0;box-sizing:border-box;"></div>
<div class="a" style="left:1227px;top:649.3px;width:116.5px;height:43.2px;border-left:1px solid #fff;border-top:1px solid #fff;box-sizing:border-box;"></div>
<div class="a" style="left:1226px;top:648.3px;width:118.5px;height:45.2px;border-right:1px solid #fff;border-bottom:1px solid #fff;box-sizing:border-box;"></div>
<div class="t" style="left:1235.70px;top:642.17px;font-size:13.5px;color:#000;transform:scale(1.0351,1.0);background:#f0f0f0;padding:0 1px;margin-left:-1px;">Object</div>
<div class="a" style="left:1283px;top:644px;width:47px;height:8px;background:#f0f0f0;"></div>
<div class="a" style="left:1289px;top:633px;width:13.5px;height:13.5px;background:#fff;border-top:1px solid #a0a0a0;border-left:1px solid #a0a0a0;border-bottom:1px solid #fff;border-right:1px solid #fff;box-sizing:border-box;"></div>
<div class="a" style="left:1290px;top:634px;width:11.5px;height:11.5px;border-top:1px solid #696969;border-left:1px solid #696969;border-bottom:1px solid #e3e3e3;border-right:1px solid #e3e3e3;box-sizing:border-box;"></div>
<svg class="a" style="left:1289px;top:633px" width="13.5" height="13.5" viewBox="0 0 13 13"><path d="M3 6.2 L5.2 8.6 L10 3.6" stroke="#000" stroke-width="2.1" fill="none"/></svg>
<div class="t" style="left:1310.50px;top:632.37px;font-size:13.5px;color:#000;transform:scale(0.9630,1.0);">ID</div>
<div class="a" style="left:1233px;top:662px;width:24px;height:21px;background:#f4f4f4;border-top:1px solid #696969;border-left:1px solid #696969;border-bottom:1px solid #fff;border-right:1px solid #fff;box-sizing:border-box;background-image:repeating-linear-gradient(45deg,#ececec 0 1px,#f8f8f8 1px 2px);"></div>
<div class="a" style="left:1234px;top:663px;width:22px;height:19px;border-top:1px solid #a0a0a0;border-left:1px solid #a0a0a0;box-sizing:border-box;"></div>
<div class="t" style="left:1240.75px;top:666.07px;font-size:13.5px;color:#a8a8a8;transform:scale(0.9428,1.0);">A</div>
<div class="a" style="left:1261px;top:662px;width:24.5px;height:21px;background:#f0f0f0;border-top:1px solid #fff;border-left:1px solid #fff;border-bottom:1px solid #696969;border-right:1px solid #696969;box-sizing:border-box;"></div>
<div class="a" style="left:1262px;top:663px;width:22.5px;height:19px;border-bottom:1px solid #a0a0a0;border-right:1px solid #a0a0a0;box-sizing:border-box;"></div>
<div class="t" style="left:1268.95px;top:666.07px;font-size:13.5px;color:#a8a8a8;transform:scale(0.9428,1.0);">B</div>
<div class="a" style="left:1288px;top:662px;width:24.4px;height:21px;background:#f0f0f0;border-top:1px solid #fff;border-left:1px solid #fff;border-bottom:1px solid #696969;border-right:1px solid #696969;box-sizing:border-box;"></div>
<div class="a" style="left:1289px;top:663px;width:22.4px;height:19px;border-bottom:1px solid #a0a0a0;border-right:1px solid #a0a0a0;box-sizing:border-box;"></div>
<div class="t" style="left:1295.70px;top:666.07px;font-size:13.5px;color:#b0b0b0;transform:scale(0.9231,1.0);">C</div>
<div class="a" style="left:1315.8px;top:662px;width:21px;height:21px;background:#f0f0f0;border-top:1px solid #fff;border-left:1px solid #fff;border-bottom:1px solid #696969;border-right:1px solid #696969;box-sizing:border-box;"></div>
<div class="a" style="left:1316.8px;top:663px;width:19px;height:19px;border-bottom:1px solid #a0a0a0;border-right:1px solid #a0a0a0;box-sizing:border-box;"></div>
<div class="t" style="left:1322.80px;top:666.07px;font-size:13.5px;color:#000;font-weight:700;transform:scale(0.8485,1.0);">L</div>
<div class="a" style="left:708px;top:700px;width:151px;height:34px;background:#f0f0f0;border-top:1px solid #fff;border-left:1px solid #fff;border-bottom:1px solid #696969;border-right:1px solid #696969;box-sizing:border-box;"></div>
<div class="a" style="left:709px;top:701px;width:149px;height:32px;border-bottom:1px solid #a0a0a0;border-right:1px solid #a0a0a0;box-sizing:border-box;"></div>
<div class="t" style="left:718.25px;top:708.50px;font-size:15px;color:#000;font-weight:700;transform:scale(0.9391,1.0);">Lunar Identification</div>
<div class="a" style="left:871px;top:700px;width:211px;height:34px;background:#f0f0f0;border-top:1px solid #fff;border-left:1px solid #fff;border-bottom:1px solid #696969;border-right:1px solid #696969;box-sizing:border-box;"></div>
<div class="a" style="left:872px;top:701px;width:209px;height:32px;border-bottom:1px solid #a0a0a0;border-right:1px solid #a0a0a0;box-sizing:border-box;"></div>
<div class="t" style="left:894.20px;top:707.21px;font-size:17px;color:#000;font-weight:700;transform:scale(1.0338,1.0);">Diffraction Analysis</div>
<div class="a" style="left:1088.4px;top:700px;width:131px;height:34px;background:#f0f0f0;border-top:1px solid #fff;border-left:1px solid #fff;border-bottom:1px solid #696969;border-right:1px solid #696969;box-sizing:border-box;"></div>
<div class="a" style="left:1089.4px;top:701px;width:129px;height:32px;border-bottom:1px solid #a0a0a0;border-right:1px solid #a0a0a0;box-sizing:border-box;"></div>
<div class="t" style="left:1103.60px;top:707.21px;font-size:17px;color:#000;font-weight:700;transform:scale(0.9801,1.0);">Make Report</div>
<div class="a" style="left:409px;top:741.5px;width:938px;height:1px;background:#a0a0a0;"></div>
<div class="a" style="left:409px;top:742.5px;width:938px;height:1px;background:#fff;"></div>
<div class="a" style="left:418.7px;top:775.4px;width:919.3px;height:112.6px;border:1px solid #a0a0a0;box-sizing:border-box;"></div>
<div class="a" style="left:419.7px;top:776.4px;width:918.3px;height:111.6px;border-left:1px solid #fff;border-top:1px solid #fff;box-sizing:border-box;"></div>
<div class="a" style="left:418.7px;top:775.4px;width:920.3px;height:113.6px;border-right:1px solid #fff;border-bottom:1px solid #fff;box-sizing:border-box;"></div>
<div class="t" style="left:426.70px;top:770.57px;font-size:13.5px;color:#000;word-spacing:2px;transform:scale(1.0669,1.0);background:#f0f0f0;padding:0 1px;margin-left:-1px;">S/N vs Error</div>
<div class="t" style="left:429.20px;top:791.88px;font-size:15.5px;color:#000;font-weight:700;transform:scale(1.0556,1.0);">S/N (Full drop)</div>
<div class="a" style="left:558px;top:787.5px;width:70px;height:31px;background:#fff;border-top:1px solid #a0a0a0;border-left:1px solid #a0a0a0;border-bottom:1px solid #fff;border-right:1px solid #fff;box-sizing:border-box;"></div>
<div class="a" style="left:559px;top:788.5px;width:68px;height:29px;border-top:1px solid #696969;border-left:1px solid #696969;border-bottom:1px solid #e3e3e3;border-right:1px solid #e3e3e3;box-sizing:border-box;"></div>
<div class="t" style="left:567.00px;top:794.96px;font-size:16px;color:#0000ff;font-weight:700;transform:scale(1.2135,1.0);">4.4</div>
<div class="t" style="left:659.50px;top:791.88px;font-size:15.5px;color:#000;font-weight:700;transform:scale(0.9867,1.0);">S/N</div>
<div class="a" style="left:699px;top:786px;width:58px;height:30px;background:#fff;border-top:1px solid #a0a0a0;border-left:1px solid #a0a0a0;border-bottom:1px solid #fff;border-right:1px solid #fff;box-sizing:border-box;"></div>
<div class="a" style="left:700px;top:787px;width:56px;height:28px;border-top:1px solid #696969;border-left:1px solid #696969;border-bottom:1px solid #e3e3e3;border-right:1px solid #e3e3e3;box-sizing:border-box;"></div>
<div class="t" style="left:702.40px;top:792.46px;font-size:16px;color:#ff0000;font-weight:700;transform:scale(1.0517,1.0);">1.1</div>
<div class="t" style="left:768.70px;top:791.88px;font-size:15.5px;color:#000;font-weight:700;transform:scale(1.0801,1.0);">expected on</div>
<div class="a" style="left:879px;top:786px;width:59px;height:31px;background:#fff;border-top:1px solid #a0a0a0;border-left:1px solid #a0a0a0;border-bottom:1px solid #fff;border-right:1px solid #fff;box-sizing:border-box;"></div>
<div class="a" style="left:880px;top:787px;width:57px;height:29px;border-top:1px solid #696969;border-left:1px solid #696969;border-bottom:1px solid #e3e3e3;border-right:1px solid #e3e3e3;box-sizing:border-box;"></div>
<div class="t" style="left:882.40px;top:792.46px;font-size:16px;color:#000;font-weight:700;transform:scale(1.0652,1.0);">0.3</div>
<div class="t" style="left:948.60px;top:790.88px;font-size:15.5px;color:#000;font-weight:700;transform:scale(1.0667,1.0);">Mag drop</div>
<div class="t" style="left:1069.00px;top:790.88px;font-size:15.5px;color:#000;font-weight:700;transform:scale(1.0731,1.0);">Frame exposure</div>
<div class="a" style="left:1219px;top:786px;width:59px;height:31px;background:#fff;border-top:1px solid #a0a0a0;border-left:1px solid #a0a0a0;border-bottom:1px solid #fff;border-right:1px solid #fff;box-sizing:border-box;"></div>
<div class="a" style="left:1220px;top:787px;width:57px;height:29px;border-top:1px solid #696969;border-left:1px solid #696969;border-bottom:1px solid #e3e3e3;border-right:1px solid #e3e3e3;box-sizing:border-box;"></div>
<div class="t" style="left:1222.30px;top:792.46px;font-size:16px;color:#000;font-weight:700;transform:scale(1.1010,1.0);">144</div>
<div class="t" style="left:1288.60px;top:790.88px;font-size:15.5px;color:#000;font-weight:700;transform:scale(1.0263,1.0);">msec</div>
<div class="t" style="left:428.10px;top:831.28px;font-size:15.5px;color:#000;font-weight:700;transform:scale(1.0519,1.0);">Fresnel</div>
<div class="t" style="left:428.10px;top:850.48px;font-size:15.5px;color:#000;font-weight:700;transform:scale(1.0584,1.0);">Number</div>
<div class="a" style="left:498px;top:835px;width:60px;height:32px;background:#fff;border-top:1px solid #a0a0a0;border-left:1px solid #a0a0a0;border-bottom:1px solid #fff;border-right:1px solid #fff;box-sizing:border-box;"></div>
<div class="a" style="left:499px;top:836px;width:58px;height:30px;border-top:1px solid #696969;border-left:1px solid #696969;border-bottom:1px solid #e3e3e3;border-right:1px solid #e3e3e3;box-sizing:border-box;"></div>
<div class="t" style="left:501.40px;top:842.76px;font-size:16px;color:#000;font-weight:700;transform:scale(1.1236,1.0);">29126</div>
<div class="t" style="left:578.50px;top:831.28px;font-size:15.5px;color:#000;font-weight:700;transform:scale(1.0807,1.0);">Lower Limit</div>
<div class="t" style="left:588.00px;top:850.48px;font-size:15.5px;color:#000;font-weight:700;transform:scale(1.0619,1.0);">for detect</div>
<div class="a" style="left:679px;top:835px;width:69px;height:32px;background:#fff;border-top:1px solid #a0a0a0;border-left:1px solid #a0a0a0;border-bottom:1px solid #fff;border-right:1px solid #fff;box-sizing:border-box;"></div>
<div class="a" style="left:680px;top:836px;width:67px;height:30px;border-top:1px solid #696969;border-left:1px solid #696969;border-bottom:1px solid #e3e3e3;border-right:1px solid #e3e3e3;box-sizing:border-box;"></div>
<div class="t" style="left:682.90px;top:842.76px;font-size:16px;color:#0000ff;font-weight:700;transform:scale(1.0760,1.0);">7765</div>
<div class="t" style="left:749.20px;top:840.88px;font-size:15.5px;color:#000;font-weight:700;transform:scale(1.0087,1.0);">msec</div>
<div class="t" style="left:808.50px;top:831.28px;font-size:15.5px;color:#000;font-weight:700;transform:scale(1.0759,1.0);">Predicted</div>
<div class="t" style="left:808.50px;top:850.93px;font-size:14.5px;color:#000;font-weight:700;transform:scale(1.0263,1.0);">Time Error</div>
<div class="a" style="left:899px;top:835.5px;width:79px;height:31px;background:#fff;border-top:1px solid #a0a0a0;border-left:1px solid #a0a0a0;border-bottom:1px solid #fff;border-right:1px solid #fff;box-sizing:border-box;"></div>
<div class="a" style="left:900px;top:836.5px;width:77px;height:29px;border-top:1px solid #696969;border-left:1px solid #696969;border-bottom:1px solid #e3e3e3;border-right:1px solid #e3e3e3;box-sizing:border-box;"></div>
<div class="t" style="left:902.60px;top:843.26px;font-size:16px;color:#ff0000;font-weight:700;transform:scale(1.0732,1.0);">1232</div>
<div class="t" style="left:979.00px;top:851.48px;font-size:15.5px;color:#000;font-weight:700;transform:scale(1.0188,1.0);">msec</div>
<div class="t" style="left:1038.20px;top:830.88px;font-size:15.5px;color:#000;font-weight:700;transform:scale(1.0536,1.0);">Expected Error for</div>
<div class="t" style="left:1038.20px;top:850.78px;font-size:15.5px;color:#000;font-weight:700;transform:scale(1.0792,1.0);">Analyzing event time</div>
<div class="a" style="left:1219px;top:835.5px;width:59px;height:31px;background:#fff;border-top:1px solid #a0a0a0;border-left:1px solid #a0a0a0;border-bottom:1px solid #fff;border-right:1px solid #fff;box-sizing:border-box;"></div>
<div class="a" style="left:1220px;top:836.5px;width:57px;height:29px;border-top:1px solid #696969;border-left:1px solid #696969;border-bottom:1px solid #e3e3e3;border-right:1px solid #e3e3e3;box-sizing:border-box;"></div>
<div class="t" style="left:1222.30px;top:842.86px;font-size:16px;color:#000;font-weight:700;transform:scale(1.1010,1.0);">668</div>
<div class="t" style="left:1285.00px;top:851.48px;font-size:15.5px;color:#000;font-weight:700;transform:scale(1.0263,1.0);">msec</div>
</body></html>
